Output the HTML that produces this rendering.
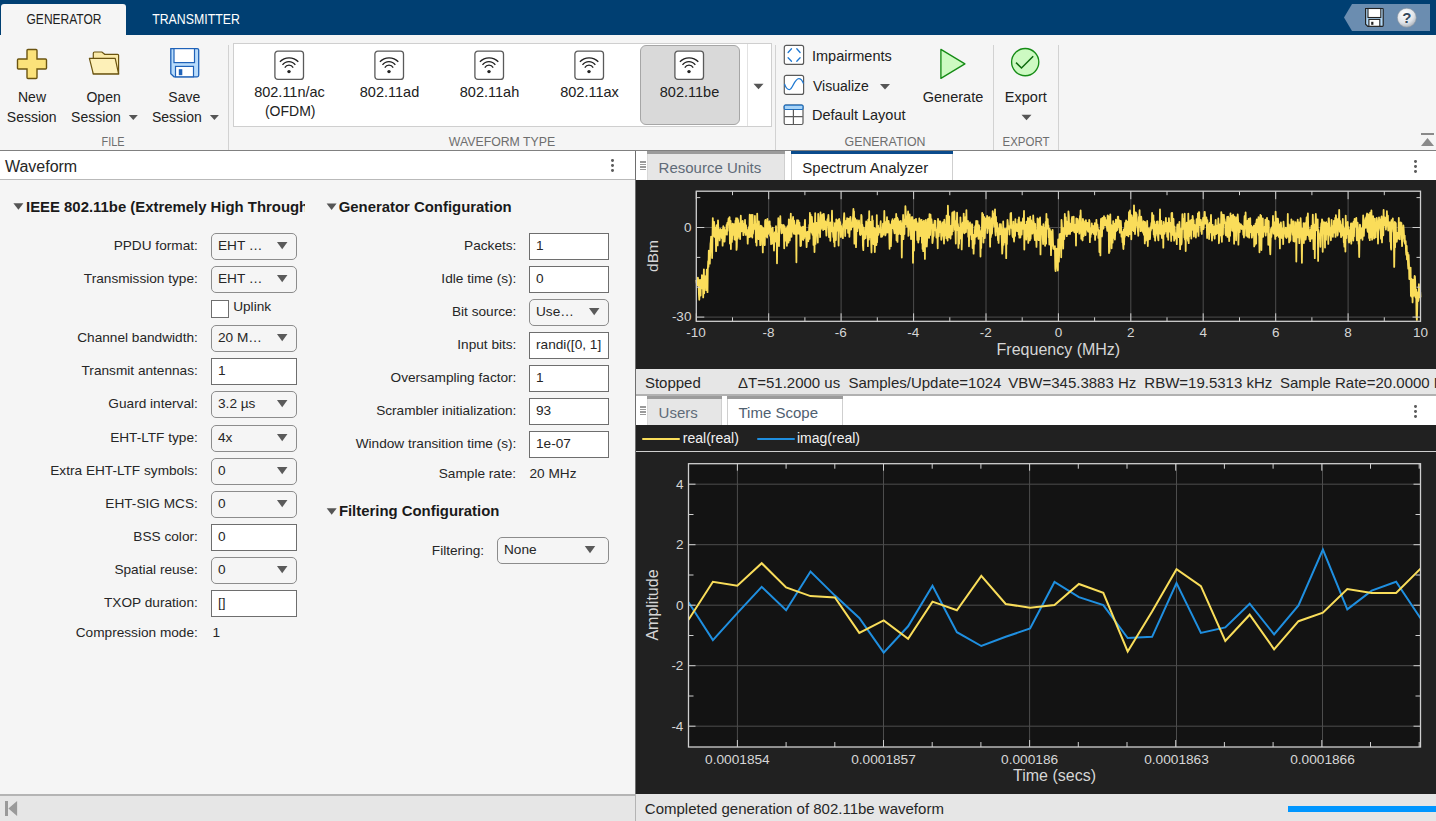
<!DOCTYPE html>
<html><head><meta charset="utf-8">
<style>
*{box-sizing:border-box;margin:0;padding:0}
html,body{width:1436px;height:821px;overflow:hidden;background:#f5f5f5;font-family:"Liberation Sans",sans-serif;color:#212121}
.a{position:absolute}
.t{position:absolute;white-space:nowrap;line-height:1}
svg{position:absolute;overflow:visible}
.dd{position:absolute;height:26px;border:1px solid #8c8c8c;border-radius:5px;background:#f5f5f5}
.ef{position:absolute;height:27px;border:1px solid #6e6e6e;background:#fff}
</style></head><body>

<div class="a" style="left:0px;top:0px;width:1436px;height:35px;background:#003f72"></div>
<div class="a" style="left:1px;top:4px;width:125px;height:31px;background:#f5f5f5;border-radius:3px 3px 0 0"></div>
<div class="t" style="left:-236.50px;width:600px;text-align:center;top:13.22px;font-size:13.8px;color:#1e1e1e;font-weight:normal;transform:scaleX(0.87)">GENERATOR</div>
<div class="t" style="left:-104.00px;width:600px;text-align:center;top:13.22px;font-size:13.8px;color:#ffffff;font-weight:normal;transform:scaleX(0.893)">TRANSMITTER</div>
<svg style="left:0;top:0" width="1436" height="40"><polygon points="1344,17.5 1352,4 1430,4 1430,31 1352,31" fill="#6b8db0"/></svg>
<svg style="left:1364px;top:7px" width="22" height="22" viewBox="0 0 22 22">
<path d="M1.6,1.5 H18.4 Q19.2,1.5 19.2,2.3 V18.6 Q19.2,19.4 18.4,19.4 H3.8 L1.6,17.2 Z" fill="#b3d9f7" stroke="#222" stroke-width="1.2"/>
<rect x="4" y="1.5" width="12.8" height="9" fill="#fff" stroke="#222" stroke-width="1.1"/>
<rect x="4.9" y="12.4" width="10.9" height="6.9" fill="#fff" stroke="#222" stroke-width="1.1"/>
<rect x="7.2" y="14.8" width="2.2" height="3" fill="#222"/>
</svg>
<svg style="left:1396px;top:7px" width="22" height="22" viewBox="0 0 22 22">
<defs><radialGradient id="hg" cx="0.4" cy="0.3" r="0.8"><stop offset="0" stop-color="#ffffff"/><stop offset="0.6" stop-color="#dfe3e8"/><stop offset="1" stop-color="#9aa3ad"/></radialGradient></defs>
<circle cx="10.8" cy="10.7" r="9.5" fill="url(#hg)" stroke="#8a949e" stroke-width="0.6"/>
<text x="10.9" y="16.2" text-anchor="middle" font-family="Liberation Sans" font-weight="bold" font-size="15" fill="#34475a">?</text>
</svg>
<div class="a" style="left:0px;top:150px;width:1436px;height:1px;background:#808080"></div>
<div class="a" style="left:228px;top:45px;width:1px;height:105px;background:#d2d2d2"></div>
<div class="a" style="left:775px;top:45px;width:1px;height:105px;background:#d2d2d2"></div>
<div class="a" style="left:993px;top:45px;width:1px;height:105px;background:#d2d2d2"></div>
<div class="a" style="left:1058px;top:45px;width:1px;height:105px;background:#d2d2d2"></div>
<svg style="left:16px;top:48px" width="32" height="32" viewBox="0 0 32 32">
<path d="M12,1.5 H20 Q21,1.5 21,2.5 V11 H29.5 Q30.5,11 30.5,12 V20 Q30.5,21 29.5,21 H21 V29.5 Q21,30.5 20,30.5 H12 Q11,30.5 11,29.5 V21 H2.5 Q1.5,21 1.5,20 V12 Q1.5,11 2.5,11 H11 V2.5 Q11,1.5 12,1.5 Z" fill="#fbe27a" stroke="#6b5410" stroke-width="1.4"/>
</svg>
<svg style="left:88px;top:50px" width="32" height="28" viewBox="0 0 32 28">
<path d="M5.3,3.2 Q5.3,2 6.5,2 H13.9 L16.7,4.3 H29.6 Q30.6,4.3 30.6,5.3 V23.8 H5.3 Z" fill="#fbeaa8" stroke="#6b5410" stroke-width="1.2"/>
<path d="M1.4,8.4 H27.2 L30.6,23.8 H5.3 Z" fill="#fdf0b8" stroke="#6b5410" stroke-width="1.2" stroke-linejoin="round"/>
</svg>
<svg style="left:169px;top:47px" width="32" height="32" viewBox="0 0 32 32">
<path d="M1.8,1.6 H28.2 Q29.7,1.6 29.7,3.1 V28.3 Q29.7,29.8 28.2,29.8 H5 L1.8,26.8 Z" fill="#b9dcfb" stroke="#1f62b8" stroke-width="1.3"/>
<rect x="5" y="1.6" width="20.5" height="14" fill="#fff" stroke="#1f62b8" stroke-width="1.2"/>
<rect x="6.5" y="19.4" width="18" height="10.4" fill="#fff" stroke="#1f62b8" stroke-width="1.2"/>
<rect x="9.8" y="22.2" width="3.5" height="6" fill="#1f62b8"/>
</svg>
<div class="t" style="left:-268.00px;width:600px;text-align:center;top:89.95px;font-size:14px;color:#212121;font-weight:normal;">New</div>
<div class="t" style="left:-268.30px;width:600px;text-align:center;top:109.75px;font-size:14px;color:#212121;font-weight:normal;">Session</div>
<div class="t" style="left:-196.40px;width:600px;text-align:center;top:89.95px;font-size:14px;color:#212121;font-weight:normal;">Open</div>
<div class="t" style="left:-204.00px;width:600px;text-align:center;top:109.75px;font-size:14px;color:#212121;font-weight:normal;">Session</div>
<div class="t" style="left:-115.70px;width:600px;text-align:center;top:89.95px;font-size:14px;color:#212121;font-weight:normal;">Save</div>
<div class="t" style="left:-123.20px;width:600px;text-align:center;top:109.75px;font-size:14px;color:#212121;font-weight:normal;">Session</div>
<svg style="left:0;top:0" width="1" height="1"><polygon points="128.8,114.9 137.8,114.9 133.3,119.9" fill="#555"/></svg>
<svg style="left:0;top:0" width="1" height="1"><polygon points="209.9,114.9 218.9,114.9 214.4,119.9" fill="#555"/></svg>
<div class="t" style="left:-187.50px;width:600px;text-align:center;top:135.39px;font-size:13.6px;color:#6e6e6e;font-weight:normal;transform:scaleX(0.80)">FILE</div>
<div class="a" style="left:233px;top:43px;width:539px;height:84px;background:#fff;border:1px solid #cfcfcf"></div>
<div class="a" style="left:640px;top:45px;width:100px;height:80px;background:#d9d9d9;border:1px solid #a6a6a6;border-radius:6px"></div>
<div class="a" style="left:747px;top:44px;width:1px;height:82px;background:#e2e2e2"></div>
<svg style="left:0;top:0" width="1" height="1"><polygon points="753.5,83.75 763.5,83.75 758.5,89.25" fill="#555"/></svg>
<svg style="left:274.3px;top:50px" width="30" height="30" viewBox="0 0 30 30">
<rect x="0.9" y="1.1" width="28.6" height="28.3" rx="3" fill="#fff" stroke="#5a5a5a" stroke-width="1.3"/>
<path d="M5.9,11.8 A12.6,12.6 0 0 1 24.3,11.8" fill="none" stroke="#222" stroke-width="1.3"/>
<path d="M8.5,14.8 A7.9,7.9 0 0 1 21.3,14.8" fill="none" stroke="#222" stroke-width="1.3"/>
<path d="M10.8,17.6 A4.9,4.9 0 0 1 19.2,17.6" fill="none" stroke="#222" stroke-width="1.3"/>
<circle cx="15" cy="21.6" r="1.7" fill="#222"/>
</svg>
<div class="t" style="left:-10.50px;width:600px;text-align:center;top:84.73px;font-size:14.5px;color:#212121;font-weight:normal;">802.11n/ac</div>
<svg style="left:374.3px;top:50px" width="30" height="30" viewBox="0 0 30 30">
<rect x="0.9" y="1.1" width="28.6" height="28.3" rx="3" fill="#fff" stroke="#5a5a5a" stroke-width="1.3"/>
<path d="M5.9,11.8 A12.6,12.6 0 0 1 24.3,11.8" fill="none" stroke="#222" stroke-width="1.3"/>
<path d="M8.5,14.8 A7.9,7.9 0 0 1 21.3,14.8" fill="none" stroke="#222" stroke-width="1.3"/>
<path d="M10.8,17.6 A4.9,4.9 0 0 1 19.2,17.6" fill="none" stroke="#222" stroke-width="1.3"/>
<circle cx="15" cy="21.6" r="1.7" fill="#222"/>
</svg>
<div class="t" style="left:89.50px;width:600px;text-align:center;top:84.73px;font-size:14.5px;color:#212121;font-weight:normal;">802.11ad</div>
<svg style="left:474.3px;top:50px" width="30" height="30" viewBox="0 0 30 30">
<rect x="0.9" y="1.1" width="28.6" height="28.3" rx="3" fill="#fff" stroke="#5a5a5a" stroke-width="1.3"/>
<path d="M5.9,11.8 A12.6,12.6 0 0 1 24.3,11.8" fill="none" stroke="#222" stroke-width="1.3"/>
<path d="M8.5,14.8 A7.9,7.9 0 0 1 21.3,14.8" fill="none" stroke="#222" stroke-width="1.3"/>
<path d="M10.8,17.6 A4.9,4.9 0 0 1 19.2,17.6" fill="none" stroke="#222" stroke-width="1.3"/>
<circle cx="15" cy="21.6" r="1.7" fill="#222"/>
</svg>
<div class="t" style="left:189.50px;width:600px;text-align:center;top:84.73px;font-size:14.5px;color:#212121;font-weight:normal;">802.11ah</div>
<svg style="left:574.3px;top:50px" width="30" height="30" viewBox="0 0 30 30">
<rect x="0.9" y="1.1" width="28.6" height="28.3" rx="3" fill="#fff" stroke="#5a5a5a" stroke-width="1.3"/>
<path d="M5.9,11.8 A12.6,12.6 0 0 1 24.3,11.8" fill="none" stroke="#222" stroke-width="1.3"/>
<path d="M8.5,14.8 A7.9,7.9 0 0 1 21.3,14.8" fill="none" stroke="#222" stroke-width="1.3"/>
<path d="M10.8,17.6 A4.9,4.9 0 0 1 19.2,17.6" fill="none" stroke="#222" stroke-width="1.3"/>
<circle cx="15" cy="21.6" r="1.7" fill="#222"/>
</svg>
<div class="t" style="left:289.50px;width:600px;text-align:center;top:84.73px;font-size:14.5px;color:#212121;font-weight:normal;">802.11ax</div>
<svg style="left:674.3px;top:50px" width="30" height="30" viewBox="0 0 30 30">
<rect x="0.9" y="1.1" width="28.6" height="28.3" rx="3" fill="#fff" stroke="#5a5a5a" stroke-width="1.3"/>
<path d="M5.9,11.8 A12.6,12.6 0 0 1 24.3,11.8" fill="none" stroke="#222" stroke-width="1.3"/>
<path d="M8.5,14.8 A7.9,7.9 0 0 1 21.3,14.8" fill="none" stroke="#222" stroke-width="1.3"/>
<path d="M10.8,17.6 A4.9,4.9 0 0 1 19.2,17.6" fill="none" stroke="#222" stroke-width="1.3"/>
<circle cx="15" cy="21.6" r="1.7" fill="#222"/>
</svg>
<div class="t" style="left:389.50px;width:600px;text-align:center;top:84.73px;font-size:14.5px;color:#212121;font-weight:normal;">802.11be</div>
<div class="t" style="left:-9.80px;width:600px;text-align:center;top:104.15px;font-size:14px;color:#212121;font-weight:normal;">(OFDM)</div>
<div class="t" style="left:202.40px;width:600px;text-align:center;top:135.39px;font-size:13.6px;color:#6e6e6e;font-weight:normal;transform:scaleX(0.905)">WAVEFORM TYPE</div>
<svg style="left:783px;top:44px" width="22" height="22" viewBox="0 0 22 22">
<rect x="1.3" y="1.4" width="19.3" height="19" rx="2" fill="#fff" stroke="#5a5a5a" stroke-width="1.2"/>
<g stroke="#1e78d2" stroke-width="1.3" fill="none" stroke-linecap="round"><path d="M5.1,8.5 L8.5,4.8"/><path d="M13.8,4.8 L17.1,8.5"/><path d="M5.1,13.7 L8.5,17.2"/><path d="M13.8,17.2 L17.1,13.7"/></g>
</svg>
<svg style="left:783px;top:74px" width="22" height="22" viewBox="0 0 22 22">
<rect x="1.3" y="1.3" width="19.3" height="19.1" rx="2" fill="#fff" stroke="#5a5a5a" stroke-width="1.2"/>
<path d="M1.5,9.9 C3,14.5 5,15.6 6.4,15.6 C9.5,15.6 11.5,4.6 15.8,4.6 C18,4.6 19.5,7 20.5,9.4" fill="none" stroke="#1e78d2" stroke-width="1.3"/>
</svg>
<svg style="left:783px;top:104px" width="22" height="22" viewBox="0 0 22 22">
<rect x="1.2" y="1.1" width="18.8" height="19.4" rx="1.5" fill="#fff" stroke="#5a5a5a" stroke-width="1.2"/>
<rect x="1.2" y="1.1" width="18.8" height="4.4" rx="1.2" fill="#a8d4f8" stroke="#1e6fc0" stroke-width="1.2"/>
<path d="M1.5,12.6 H19.8 M10.4,5.5 V20.4" stroke="#5a5a5a" stroke-width="1.2"/>
</svg>
<div class="t" style="left:812.00px;top:48.63px;font-size:14.5px;color:#212121;font-weight:normal;">Impairments</div>
<div class="t" style="left:813.00px;top:78.95px;font-size:14px;color:#212121;font-weight:normal;">Visualize</div>
<svg style="left:0;top:0" width="1" height="1"><polygon points="880.0,84.05 890.0,84.05 885,89.55" fill="#555"/></svg>
<div class="t" style="left:812.00px;top:107.73px;font-size:14.5px;color:#212121;font-weight:normal;">Default Layout</div>
<svg style="left:938px;top:47px" width="30" height="34" viewBox="0 0 30 34">
<polygon points="2.9,2.4 26.9,16.8 2.9,31.4" fill="#cdfac2" stroke="#158c15" stroke-width="1.35" stroke-linejoin="round"/>
</svg>
<div class="t" style="left:653.00px;width:600px;text-align:center;top:89.83px;font-size:14.5px;color:#212121;font-weight:normal;">Generate</div>
<div class="t" style="left:585.20px;width:600px;text-align:center;top:135.39px;font-size:13.6px;color:#6e6e6e;font-weight:normal;transform:scaleX(0.91)">GENERATION</div>
<svg style="left:1009px;top:46px" width="33" height="33" viewBox="0 0 33 33">
<circle cx="16.2" cy="16.1" r="13.6" fill="#cdfac2" stroke="#158c15" stroke-width="1.35"/>
<path d="M7,16.6 L12.5,22 L24.2,10.3" fill="none" stroke="#0e6a0e" stroke-width="1.5"/>
</svg>
<div class="t" style="left:725.80px;width:600px;text-align:center;top:89.83px;font-size:14.5px;color:#212121;font-weight:normal;">Export</div>
<svg style="left:0;top:0" width="1" height="1"><polygon points="1021.5,114.75 1031.5,114.75 1026.5,120.25" fill="#555"/></svg>
<div class="t" style="left:726.20px;width:600px;text-align:center;top:135.39px;font-size:13.6px;color:#6e6e6e;font-weight:normal;transform:scaleX(0.845)">EXPORT</div>
<div class="a" style="left:1421px;top:133px;width:13px;height:2px;background:#8a8a8a"></div>
<svg style="left:0;top:0" width="1" height="1"><polygon points="1421,146 1434,146 1427.5,138" fill="#8a8a8a"/></svg>
<div class="a" style="left:0px;top:151px;width:635px;height:29px;background:#fff"></div>
<div class="a" style="left:0px;top:179px;width:635px;height:1px;background:#b9b9b9"></div>
<div class="a" style="left:635px;top:151px;width:1px;height:644px;background:#6e6e6e"></div>
<div class="t" style="left:4.90px;top:159.06px;font-size:16px;color:#262626;font-weight:normal;">Waveform</div>
<div class="a" style="left:611.1px;top:159.1px;width:2.8px;height:2.8px;background:#5c5c5c;border-radius:50%"></div>
<div class="a" style="left:611.1px;top:164.1px;width:2.8px;height:2.8px;background:#5c5c5c;border-radius:50%"></div>
<div class="a" style="left:611.1px;top:169.1px;width:2.8px;height:2.8px;background:#5c5c5c;border-radius:50%"></div>
<svg style="left:0;top:0" width="1" height="1"><polygon points="13.4,203.2 23.4,203.2 18.4,209.7" fill="#555"/></svg>
<div class="t" style="left:26px;top:200.09px;width:279px;overflow:hidden;font-size:14.9px;font-weight:bold;color:#1a1a1a">IEEE 802.11be (Extremely High Throughput)</div>
<svg style="left:0;top:0" width="1" height="1"><polygon points="326.6,203.4 336.6,203.4 331.6,209.9" fill="#555"/></svg>
<div class="t" style="left:338.70px;top:200.09px;font-size:14.9px;color:#1a1a1a;font-weight:bold;">Generator Configuration</div>
<svg style="left:0;top:0" width="1" height="1"><polygon points="326.7,508.2 336.7,508.2 331.7,514.7" fill="#555"/></svg>
<div class="t" style="left:338.90px;top:503.69px;font-size:14.9px;color:#1a1a1a;font-weight:bold;">Filtering Configuration</div>
<div class="t" style="left:-402.20px;width:600px;text-align:right;top:238.65px;font-size:13.65px;color:#262626;font-weight:normal;">PPDU format:</div>
<div class="dd" style="left:211px;top:233px;width:86px;height:27px"></div>
<div class="t" style="left:218.00px;top:238.95px;font-size:13.65px;color:#262626;font-weight:normal;">EHT …</div>
<svg style="left:0;top:0" width="1" height="1"><polygon points="276.95,242.0 287.45,242.0 282.2,249.2" fill="#5a5a5a"/></svg>
<div class="t" style="left:-402.20px;width:600px;text-align:right;top:271.65px;font-size:13.65px;color:#262626;font-weight:normal;">Transmission type:</div>
<div class="dd" style="left:211px;top:266px;width:86px;height:27px"></div>
<div class="t" style="left:218.00px;top:271.95px;font-size:13.65px;color:#262626;font-weight:normal;">EHT …</div>
<svg style="left:0;top:0" width="1" height="1"><polygon points="276.95,275.0 287.45,275.0 282.2,282.20000000000005" fill="#5a5a5a"/></svg>
<div class="t" style="left:-402.20px;width:600px;text-align:right;top:330.65px;font-size:13.65px;color:#262626;font-weight:normal;">Channel bandwidth:</div>
<div class="dd" style="left:211px;top:325px;width:86px;height:27px"></div>
<div class="t" style="left:218.00px;top:330.95px;font-size:13.65px;color:#262626;font-weight:normal;">20 M…</div>
<svg style="left:0;top:0" width="1" height="1"><polygon points="276.95,334.0 287.45,334.0 282.2,341.20000000000005" fill="#5a5a5a"/></svg>
<div class="t" style="left:-402.20px;width:600px;text-align:right;top:363.65px;font-size:13.65px;color:#262626;font-weight:normal;">Transmit antennas:</div>
<div class="ef" style="left:211px;top:358px;width:86px;height:27px"></div>
<div class="t" style="left:218.00px;top:364.45px;font-size:13.65px;color:#262626;font-weight:normal;">1</div>
<div class="t" style="left:-402.20px;width:600px;text-align:right;top:396.65px;font-size:13.65px;color:#262626;font-weight:normal;">Guard interval:</div>
<div class="dd" style="left:211px;top:391px;width:86px;height:27px"></div>
<div class="t" style="left:218.00px;top:396.95px;font-size:13.65px;color:#262626;font-weight:normal;">3.2 µs</div>
<svg style="left:0;top:0" width="1" height="1"><polygon points="276.95,400.0 287.45,400.0 282.2,407.20000000000005" fill="#5a5a5a"/></svg>
<div class="t" style="left:-402.20px;width:600px;text-align:right;top:430.65px;font-size:13.65px;color:#262626;font-weight:normal;">EHT-LTF type:</div>
<div class="dd" style="left:211px;top:425px;width:86px;height:27px"></div>
<div class="t" style="left:218.00px;top:430.95px;font-size:13.65px;color:#262626;font-weight:normal;">4x</div>
<svg style="left:0;top:0" width="1" height="1"><polygon points="276.95,434.0 287.45,434.0 282.2,441.20000000000005" fill="#5a5a5a"/></svg>
<div class="t" style="left:-402.20px;width:600px;text-align:right;top:463.65px;font-size:13.65px;color:#262626;font-weight:normal;">Extra EHT-LTF symbols:</div>
<div class="dd" style="left:211px;top:458px;width:86px;height:27px"></div>
<div class="t" style="left:218.00px;top:463.95px;font-size:13.65px;color:#262626;font-weight:normal;">0</div>
<svg style="left:0;top:0" width="1" height="1"><polygon points="276.95,467.0 287.45,467.0 282.2,474.20000000000005" fill="#5a5a5a"/></svg>
<div class="t" style="left:-402.20px;width:600px;text-align:right;top:496.65px;font-size:13.65px;color:#262626;font-weight:normal;">EHT-SIG MCS:</div>
<div class="dd" style="left:211px;top:491px;width:86px;height:27px"></div>
<div class="t" style="left:218.00px;top:496.95px;font-size:13.65px;color:#262626;font-weight:normal;">0</div>
<svg style="left:0;top:0" width="1" height="1"><polygon points="276.95,500.0 287.45,500.0 282.2,507.20000000000005" fill="#5a5a5a"/></svg>
<div class="t" style="left:-402.20px;width:600px;text-align:right;top:529.65px;font-size:13.65px;color:#262626;font-weight:normal;">BSS color:</div>
<div class="ef" style="left:211px;top:524px;width:86px;height:27px"></div>
<div class="t" style="left:218.00px;top:530.45px;font-size:13.65px;color:#262626;font-weight:normal;">0</div>
<div class="t" style="left:-402.20px;width:600px;text-align:right;top:562.65px;font-size:13.65px;color:#262626;font-weight:normal;">Spatial reuse:</div>
<div class="dd" style="left:211px;top:557px;width:86px;height:27px"></div>
<div class="t" style="left:218.00px;top:562.95px;font-size:13.65px;color:#262626;font-weight:normal;">0</div>
<svg style="left:0;top:0" width="1" height="1"><polygon points="276.95,566.0 287.45,566.0 282.2,573.2" fill="#5a5a5a"/></svg>
<div class="t" style="left:-402.20px;width:600px;text-align:right;top:595.65px;font-size:13.65px;color:#262626;font-weight:normal;">TXOP duration:</div>
<div class="ef" style="left:211px;top:590px;width:86px;height:27px"></div>
<div class="t" style="left:218.00px;top:596.45px;font-size:13.65px;color:#262626;font-weight:normal;">[]</div>
<div class="a" style="left:211px;top:300px;width:18px;height:18px;background:#fff;border:1px solid #6e6e6e"></div>
<div class="t" style="left:233.20px;top:300.05px;font-size:13.65px;color:#262626;font-weight:normal;">Uplink</div>
<div class="t" style="left:-402.20px;width:600px;text-align:right;top:626.05px;font-size:13.65px;color:#262626;font-weight:normal;">Compression mode:</div>
<div class="t" style="left:212.50px;top:626.05px;font-size:13.65px;color:#262626;font-weight:normal;">1</div>
<div class="t" style="left:-83.60px;width:600px;text-align:right;top:238.65px;font-size:13.65px;color:#262626;font-weight:normal;">Packets:</div>
<div class="ef" style="left:529px;top:233px;width:80px;height:27px"></div>
<div class="t" style="left:536.00px;top:239.45px;font-size:13.65px;color:#262626;font-weight:normal;">1</div>
<div class="t" style="left:-83.60px;width:600px;text-align:right;top:271.65px;font-size:13.65px;color:#262626;font-weight:normal;">Idle time (s):</div>
<div class="ef" style="left:529px;top:266px;width:80px;height:27px"></div>
<div class="t" style="left:536.00px;top:272.45px;font-size:13.65px;color:#262626;font-weight:normal;">0</div>
<div class="t" style="left:-83.60px;width:600px;text-align:right;top:304.65px;font-size:13.65px;color:#262626;font-weight:normal;">Bit source:</div>
<div class="dd" style="left:529px;top:299px;width:80px;height:27px"></div>
<div class="t" style="left:536.00px;top:304.95px;font-size:13.65px;color:#262626;font-weight:normal;">Use…</div>
<svg style="left:0;top:0" width="1" height="1"><polygon points="588.95,308.0 599.45,308.0 594.2,315.20000000000005" fill="#5a5a5a"/></svg>
<div class="t" style="left:-83.60px;width:600px;text-align:right;top:337.65px;font-size:13.65px;color:#262626;font-weight:normal;">Input bits:</div>
<div class="ef" style="left:529px;top:332px;width:80px;height:27px"></div>
<div class="t" style="left:536.00px;top:338.45px;font-size:13.65px;color:#262626;font-weight:normal;">randi([0, 1]</div>
<div class="t" style="left:-83.60px;width:600px;text-align:right;top:370.65px;font-size:13.65px;color:#262626;font-weight:normal;">Oversampling factor:</div>
<div class="ef" style="left:529px;top:365px;width:80px;height:27px"></div>
<div class="t" style="left:536.00px;top:371.45px;font-size:13.65px;color:#262626;font-weight:normal;">1</div>
<div class="t" style="left:-83.60px;width:600px;text-align:right;top:403.65px;font-size:13.65px;color:#262626;font-weight:normal;">Scrambler initialization:</div>
<div class="ef" style="left:529px;top:398px;width:80px;height:27px"></div>
<div class="t" style="left:536.00px;top:404.45px;font-size:13.65px;color:#262626;font-weight:normal;">93</div>
<div class="t" style="left:-83.60px;width:600px;text-align:right;top:436.65px;font-size:13.65px;color:#262626;font-weight:normal;">Window transition time (s):</div>
<div class="ef" style="left:529px;top:431px;width:80px;height:27px"></div>
<div class="t" style="left:536.00px;top:437.45px;font-size:13.65px;color:#262626;font-weight:normal;">1e-07</div>
<div class="t" style="left:-83.90px;width:600px;text-align:right;top:467.25px;font-size:13.65px;color:#262626;font-weight:normal;">Sample rate:</div>
<div class="t" style="left:529.50px;top:467.25px;font-size:13.65px;color:#262626;font-weight:normal;">20 MHz</div>
<div class="t" style="left:-115.90px;width:600px;text-align:right;top:543.65px;font-size:13.65px;color:#262626;font-weight:normal;">Filtering:</div>
<div class="dd" style="left:497px;top:537px;width:112px;height:27px"></div>
<div class="t" style="left:504.00px;top:542.95px;font-size:13.65px;color:#262626;font-weight:normal;">None</div>
<svg style="left:0;top:0" width="1" height="1"><polygon points="584.75,546.0 595.25,546.0 590,553.2" fill="#5a5a5a"/></svg>
<div class="a" style="left:636px;top:151px;width:800px;height:29px;background:#fff"></div>
<div class="a" style="left:640px;top:161.2px;width:6px;height:1.4px;background:#9a9a9a"></div>
<div class="a" style="left:640px;top:163.8px;width:6px;height:1.4px;background:#9a9a9a"></div>
<div class="a" style="left:640px;top:166.4px;width:6px;height:1.4px;background:#9a9a9a"></div>
<div class="a" style="left:640px;top:169.0px;width:6px;height:1.4px;background:#9a9a9a"></div>
<div class="a" style="left:647px;top:151px;width:138px;height:29px;background:#e6e6e6;border-right:1px solid #cfcfcf;border-left:1px solid #d8d8d8"></div>
<div class="a" style="left:647px;top:151px;width:138px;height:3px;background:#9b9b9b"></div>
<div class="t" style="left:658.60px;top:159.50px;font-size:15px;color:#5f6b78;font-weight:normal;">Resource Units</div>
<div class="a" style="left:791px;top:151px;width:162px;height:29px;background:#fff;border-left:1px solid #cfcfcf;border-right:1px solid #cfcfcf"></div>
<div class="a" style="left:791px;top:151px;width:162px;height:3px;background:#0a4b8c"></div>
<div class="t" style="left:802.30px;top:159.50px;font-size:15px;color:#1f1f1f;font-weight:normal;">Spectrum Analyzer</div>
<div class="a" style="left:1414.1px;top:160.1px;width:2.8px;height:2.8px;background:#5c5c5c;border-radius:50%"></div>
<div class="a" style="left:1414.1px;top:165.1px;width:2.8px;height:2.8px;background:#5c5c5c;border-radius:50%"></div>
<div class="a" style="left:1414.1px;top:170.1px;width:2.8px;height:2.8px;background:#5c5c5c;border-radius:50%"></div>
<div class="a" style="left:636px;top:180px;width:800px;height:189px;background:#212121"></div>
<div class="a" style="left:636px;top:369px;width:800px;height:26px;background:#e6e6e6"></div>
<div class="a" style="left:636px;top:394px;width:800px;height:2px;background:#b1b1b1"></div>
<div class="t" style="left:644.90px;top:375.10px;font-size:15px;color:#262626;font-weight:normal;">Stopped</div>
<div class="t" style="left:738.00px;top:375.10px;font-size:15px;color:#262626;font-weight:normal;">ΔT=51.2000 us</div>
<div class="t" style="left:848.40px;top:375.10px;font-size:15px;color:#262626;font-weight:normal;">Samples/Update=1024</div>
<div class="t" style="left:1008.30px;top:375.10px;font-size:15px;color:#262626;font-weight:normal;">VBW=345.3883 Hz</div>
<div class="t" style="left:1144.30px;top:375.10px;font-size:15px;color:#262626;font-weight:normal;">RBW=19.5313 kHz</div>
<div class="t" style="left:1280.00px;top:375.10px;font-size:15px;color:#262626;font-weight:normal;">Sample Rate=20.0000 MHz</div>
<svg style="left:0;top:0" width="1436" height="821">
<rect x="696.3" y="191.2" width="724.2" height="130.10000000000002" fill="#131313"/>
<line x1="768.7" y1="191.2" x2="768.7" y2="321.3" stroke="#4d4d4d" stroke-width="1"/>
<line x1="841.1" y1="191.2" x2="841.1" y2="321.3" stroke="#4d4d4d" stroke-width="1"/>
<line x1="913.6" y1="191.2" x2="913.6" y2="321.3" stroke="#4d4d4d" stroke-width="1"/>
<line x1="986.0" y1="191.2" x2="986.0" y2="321.3" stroke="#4d4d4d" stroke-width="1"/>
<line x1="1058.4" y1="191.2" x2="1058.4" y2="321.3" stroke="#4d4d4d" stroke-width="1"/>
<line x1="1130.8" y1="191.2" x2="1130.8" y2="321.3" stroke="#4d4d4d" stroke-width="1"/>
<line x1="1203.2" y1="191.2" x2="1203.2" y2="321.3" stroke="#4d4d4d" stroke-width="1"/>
<line x1="1275.7" y1="191.2" x2="1275.7" y2="321.3" stroke="#4d4d4d" stroke-width="1"/>
<line x1="1348.1" y1="191.2" x2="1348.1" y2="321.3" stroke="#4d4d4d" stroke-width="1"/>
<line x1="696.3" y1="227.5" x2="1420.5" y2="227.5" stroke="#4d4d4d" stroke-width="1"/>
<line x1="696.3" y1="317.1" x2="1420.5" y2="317.1" stroke="#4d4d4d" stroke-width="1"/>
<polyline points="696.3,280.0 696.6,282.6 697.0,284.4 697.3,280.4 697.6,285.2 697.9,277.6 698.3,280.6 698.6,281.7 698.9,294.0 699.3,299.8 699.6,292.9 699.9,279.9 700.3,281.4 700.6,295.5 700.9,279.8 701.2,288.1 701.6,288.4 701.9,275.2 702.2,282.9 702.6,281.8 702.9,281.9 703.2,297.4 703.5,281.8 703.9,269.3 704.2,293.3 704.5,277.8 704.9,276.7 705.2,276.3 705.5,286.4 705.9,283.9 706.2,290.1 706.5,280.2 706.8,269.6 707.2,281.7 707.5,292.2 707.8,269.8 708.2,261.2 708.5,266.7 708.8,250.6 709.1,261.1 709.5,257.1 709.8,263.7 710.1,254.9 710.5,243.9 710.8,241.5 711.1,236.6 711.4,237.4 711.8,236.8 712.1,258.1 712.4,242.8 712.8,218.1 713.1,236.1 713.4,225.2 713.8,228.8 714.1,221.9 714.4,227.2 714.7,236.9 715.1,236.0 715.4,227.9 715.7,235.2 716.1,251.2 716.4,228.4 716.7,225.1 717.0,225.6 717.4,225.3 717.7,245.4 718.0,220.3 718.4,232.1 718.7,238.0 719.0,233.6 719.4,235.6 719.7,240.4 720.0,230.0 720.3,229.0 720.7,232.2 721.0,229.9 721.3,233.0 721.7,238.1 722.0,237.3 722.3,229.3 722.6,245.7 723.0,237.2 723.3,226.2 723.6,230.7 724.0,227.5 724.3,231.9 724.6,241.6 725.0,234.5 725.3,230.3 725.6,234.1 725.9,232.3 726.3,229.7 726.6,224.8 726.9,234.6 727.3,222.9 727.6,230.8 727.9,223.6 728.2,222.4 728.6,218.3 728.9,222.0 729.2,221.5 729.6,217.2 729.9,243.6 730.2,236.1 730.6,220.9 730.9,249.1 731.2,227.0 731.5,227.2 731.9,241.9 732.2,236.1 732.5,223.6 732.9,224.2 733.2,232.8 733.5,234.9 733.8,233.7 734.2,224.1 734.5,239.4 734.8,227.0 735.2,239.8 735.5,220.7 735.8,225.6 736.1,218.2 736.5,249.9 736.8,247.0 737.1,233.2 737.5,218.3 737.8,238.6 738.1,220.0 738.5,227.7 738.8,227.6 739.1,223.5 739.4,236.8 739.8,233.2 740.1,239.0 740.4,227.4 740.8,215.7 741.1,231.4 741.4,224.8 741.7,226.0 742.1,227.7 742.4,231.1 742.7,221.0 743.1,230.0 743.4,235.2 743.7,223.8 744.1,226.0 744.4,229.2 744.7,232.3 745.0,219.9 745.4,230.4 745.7,234.9 746.0,225.2 746.4,231.5 746.7,229.0 747.0,231.6 747.3,230.2 747.7,243.7 748.0,235.8 748.3,235.0 748.7,231.0 749.0,226.9 749.3,237.1 749.7,214.7 750.0,229.3 750.3,224.7 750.6,236.6 751.0,234.0 751.3,215.0 751.6,221.0 752.0,226.6 752.3,237.6 752.6,215.0 752.9,233.9 753.3,230.2 753.6,228.1 753.9,224.7 754.3,227.9 754.6,228.7 754.9,215.9 755.3,228.4 755.6,226.1 755.9,242.3 756.2,223.8 756.6,245.5 756.9,234.3 757.2,213.6 757.6,234.9 757.9,228.6 758.2,238.7 758.5,239.0 758.9,221.4 759.2,233.6 759.5,231.3 759.9,233.7 760.2,245.2 760.5,233.9 760.8,225.7 761.2,240.2 761.5,230.8 761.8,226.5 762.2,245.0 762.5,227.8 762.8,252.4 763.2,228.2 763.5,235.2 763.8,241.4 764.1,231.9 764.5,235.2 764.8,245.1 765.1,221.0 765.5,219.8 765.8,236.3 766.1,230.4 766.4,230.7 766.8,228.4 767.1,237.5 767.4,219.0 767.8,225.3 768.1,234.0 768.4,229.7 768.8,232.2 769.1,227.4 769.4,221.3 769.7,221.4 770.1,235.8 770.4,226.0 770.7,234.7 771.1,244.1 771.4,237.5 771.7,228.9 772.0,243.6 772.4,236.2 772.7,227.6 773.0,237.2 773.4,238.0 773.7,240.5 774.0,250.5 774.4,235.1 774.7,232.8 775.0,232.1 775.3,241.6 775.7,241.0 776.0,226.1 776.3,239.6 776.7,233.5 777.0,263.3 777.3,239.0 777.6,238.5 778.0,242.6 778.3,218.2 778.6,230.8 779.0,246.1 779.3,227.0 779.6,227.0 780.0,226.2 780.3,216.1 780.6,225.8 780.9,224.9 781.3,230.5 781.6,233.4 781.9,224.9 782.3,225.6 782.6,232.7 782.9,229.2 783.2,225.1 783.6,225.0 783.9,231.4 784.2,248.3 784.6,226.4 784.9,231.8 785.2,237.5 785.5,233.9 785.9,240.6 786.2,228.7 786.5,233.5 786.9,245.8 787.2,227.6 787.5,226.3 787.9,231.1 788.2,225.3 788.5,242.6 788.8,219.4 789.2,225.5 789.5,219.9 789.8,240.4 790.2,231.3 790.5,228.7 790.8,213.6 791.1,226.2 791.5,236.8 791.8,221.8 792.1,224.0 792.5,231.5 792.8,219.3 793.1,217.0 793.5,227.2 793.8,233.7 794.1,220.6 794.4,222.9 794.8,228.8 795.1,234.0 795.4,230.0 795.8,225.3 796.1,229.2 796.4,262.3 796.7,226.8 797.1,220.1 797.4,229.9 797.7,227.0 798.1,233.5 798.4,220.3 798.7,233.7 799.1,223.7 799.4,222.6 799.7,234.0 800.0,226.2 800.4,246.0 800.7,228.8 801.0,245.7 801.4,227.4 801.7,235.1 802.0,233.2 802.3,239.4 802.7,230.0 803.0,226.7 803.3,240.0 803.7,235.0 804.0,230.6 804.3,237.9 804.7,224.3 805.0,219.9 805.3,231.7 805.6,234.6 806.0,232.7 806.3,240.9 806.6,247.1 807.0,240.0 807.3,231.6 807.6,235.8 807.9,240.4 808.3,241.2 808.6,231.7 808.9,233.7 809.3,224.9 809.6,238.8 809.9,212.8 810.2,229.5 810.6,214.7 810.9,231.2 811.2,224.5 811.6,232.6 811.9,216.8 812.2,223.5 812.6,234.8 812.9,230.2 813.2,223.5 813.5,244.9 813.9,234.5 814.2,232.9 814.5,252.1 814.9,224.9 815.2,213.2 815.5,243.9 815.8,236.8 816.2,225.0 816.5,222.9 816.8,223.3 817.2,228.3 817.5,230.4 817.8,242.5 818.2,213.9 818.5,217.3 818.8,232.5 819.1,227.4 819.5,229.5 819.8,230.9 820.1,237.1 820.5,212.4 820.8,229.1 821.1,221.7 821.4,228.2 821.8,224.1 822.1,215.0 822.4,224.7 822.8,214.5 823.1,230.1 823.4,219.0 823.8,213.9 824.1,217.9 824.4,229.1 824.7,226.5 825.1,229.2 825.4,221.5 825.7,225.8 826.1,230.9 826.4,235.7 826.7,230.1 827.0,224.9 827.4,219.2 827.7,221.4 828.0,219.2 828.4,214.9 828.7,220.5 829.0,237.1 829.3,225.5 829.7,236.1 830.0,222.9 830.3,240.8 830.7,225.4 831.0,224.6 831.3,221.8 831.7,226.9 832.0,210.7 832.3,231.5 832.6,222.1 833.0,232.2 833.3,237.0 833.6,232.4 834.0,242.2 834.3,227.5 834.6,246.4 834.9,223.2 835.3,229.9 835.6,224.7 835.9,240.1 836.3,219.3 836.6,221.1 836.9,222.5 837.3,230.5 837.6,223.4 837.9,229.6 838.2,220.1 838.6,245.5 838.9,228.1 839.2,218.8 839.6,222.0 839.9,221.7 840.2,222.5 840.5,227.3 840.9,237.0 841.2,225.8 841.5,233.3 841.9,232.2 842.2,231.1 842.5,230.1 842.9,238.2 843.2,224.2 843.5,227.1 843.8,219.5 844.2,213.2 844.5,220.2 844.8,223.9 845.2,236.0 845.5,223.7 845.8,221.6 846.1,220.9 846.5,223.1 846.8,228.4 847.1,218.1 847.5,224.3 847.8,218.7 848.1,232.8 848.5,224.7 848.8,218.8 849.1,218.7 849.4,236.8 849.8,227.2 850.1,228.8 850.4,216.8 850.8,221.6 851.1,229.6 851.4,223.9 851.7,227.4 852.1,222.9 852.4,226.8 852.7,221.8 853.1,215.2 853.4,209.0 853.7,218.0 854.0,211.5 854.4,243.7 854.7,218.8 855.0,218.2 855.4,220.0 855.7,223.9 856.0,247.2 856.4,232.3 856.7,224.9 857.0,220.2 857.3,231.1 857.7,223.4 858.0,224.6 858.3,224.8 858.7,224.0 859.0,220.4 859.3,228.1 859.6,227.3 860.0,234.6 860.3,230.6 860.6,235.0 861.0,225.1 861.3,214.9 861.6,216.3 862.0,233.9 862.3,224.6 862.6,227.2 862.9,245.1 863.3,250.2 863.6,232.6 863.9,227.7 864.3,239.1 864.6,235.0 864.9,233.9 865.2,234.8 865.6,238.2 865.9,228.2 866.2,221.4 866.6,224.2 866.9,234.4 867.2,227.8 867.6,226.2 867.9,246.2 868.2,219.7 868.5,233.2 868.9,239.5 869.2,211.2 869.5,237.2 869.9,231.0 870.2,235.1 870.5,221.9 870.8,231.7 871.2,243.5 871.5,252.4 871.8,234.2 872.2,216.2 872.5,239.2 872.8,220.5 873.2,237.2 873.5,244.2 873.8,231.1 874.1,227.8 874.5,231.1 874.8,252.1 875.1,236.3 875.5,228.8 875.8,236.3 876.1,228.4 876.4,245.0 876.8,215.1 877.1,242.1 877.4,233.0 877.8,233.0 878.1,225.7 878.4,234.9 878.7,231.6 879.1,232.6 879.4,228.4 879.7,228.4 880.1,232.0 880.4,225.2 880.7,221.2 881.1,236.9 881.4,236.0 881.7,236.2 882.0,236.5 882.4,235.7 882.7,229.3 883.0,223.6 883.4,234.5 883.7,225.0 884.0,231.4 884.3,211.0 884.7,225.4 885.0,221.6 885.3,235.4 885.7,234.0 886.0,224.6 886.3,232.6 886.7,226.2 887.0,217.1 887.3,231.5 887.6,232.5 888.0,224.0 888.3,227.5 888.6,220.9 889.0,227.1 889.3,235.8 889.6,248.8 889.9,224.5 890.3,233.6 890.6,227.0 890.9,246.1 891.3,235.0 891.6,225.9 891.9,221.1 892.3,220.8 892.6,219.2 892.9,228.2 893.2,220.7 893.6,224.7 893.9,229.1 894.2,230.7 894.6,233.4 894.9,219.0 895.2,226.1 895.5,232.7 895.9,227.6 896.2,213.9 896.5,240.3 896.9,240.2 897.2,217.7 897.5,241.9 897.9,219.0 898.2,234.3 898.5,226.9 898.8,221.2 899.2,221.6 899.5,225.5 899.8,231.7 900.2,234.0 900.5,234.0 900.8,221.0 901.1,229.3 901.5,223.2 901.8,257.6 902.1,233.9 902.5,228.1 902.8,233.2 903.1,215.0 903.4,239.2 903.8,224.0 904.1,220.8 904.4,234.0 904.8,219.5 905.1,222.0 905.4,206.2 905.8,213.7 906.1,224.0 906.4,216.1 906.7,219.8 907.1,226.7 907.4,217.7 907.7,218.8 908.1,211.4 908.4,235.9 908.7,235.3 909.0,229.1 909.4,217.3 909.7,214.4 910.0,223.4 910.4,220.6 910.7,222.4 911.0,239.1 911.4,230.8 911.7,217.1 912.0,218.2 912.3,217.2 912.7,223.5 913.0,262.8 913.3,237.7 913.7,238.8 914.0,250.5 914.3,219.9 914.6,230.8 915.0,221.6 915.3,222.6 915.6,224.0 916.0,218.8 916.3,230.0 916.6,221.9 917.0,225.3 917.3,239.9 917.6,233.8 917.9,238.9 918.3,242.6 918.6,223.1 918.9,239.8 919.3,218.3 919.6,227.1 919.9,226.8 920.2,236.0 920.6,221.4 920.9,232.6 921.2,219.8 921.6,219.9 921.9,242.8 922.2,222.7 922.6,248.9 922.9,221.8 923.2,251.2 923.5,239.0 923.9,220.7 924.2,228.9 924.5,225.8 924.9,258.9 925.2,225.6 925.5,238.9 925.8,219.8 926.2,230.7 926.5,231.7 926.8,246.5 927.2,238.3 927.5,229.8 927.8,219.1 928.1,219.0 928.5,229.7 928.8,237.6 929.1,237.9 929.5,214.1 929.8,223.2 930.1,235.1 930.5,214.6 930.8,221.1 931.1,219.6 931.4,219.2 931.8,223.2 932.1,230.6 932.4,243.1 932.8,240.1 933.1,235.9 933.4,224.6 933.7,235.9 934.1,224.0 934.4,223.9 934.7,220.6 935.1,220.9 935.4,220.8 935.7,230.6 936.1,231.1 936.4,237.5 936.7,229.5 937.0,230.0 937.4,236.0 937.7,248.3 938.0,218.9 938.4,223.5 938.7,236.3 939.0,231.1 939.3,221.3 939.7,232.1 940.0,225.7 940.3,221.3 940.7,223.6 941.0,232.2 941.3,239.8 941.7,236.1 942.0,228.0 942.3,235.7 942.6,223.0 943.0,222.1 943.3,223.5 943.6,227.9 944.0,243.5 944.3,219.7 944.6,224.4 944.9,234.5 945.3,235.4 945.6,231.8 945.9,224.3 946.3,238.3 946.6,215.6 946.9,226.7 947.3,219.3 947.6,240.6 947.9,205.7 948.2,217.5 948.6,226.4 948.9,237.2 949.2,216.3 949.6,230.7 949.9,231.1 950.2,235.4 950.5,238.7 950.9,227.1 951.2,225.6 951.5,228.6 951.9,234.5 952.2,213.3 952.5,212.4 952.8,231.2 953.2,214.4 953.5,223.6 953.8,225.0 954.2,211.3 954.5,212.5 954.8,229.8 955.2,221.3 955.5,232.5 955.8,243.6 956.1,220.8 956.5,224.0 956.8,222.1 957.1,212.7 957.5,230.1 957.8,223.9 958.1,226.6 958.4,247.9 958.8,229.6 959.1,243.7 959.4,227.6 959.8,237.8 960.1,238.5 960.4,217.3 960.8,230.8 961.1,229.2 961.4,223.8 961.7,249.4 962.1,234.3 962.4,232.5 962.7,222.4 963.1,223.8 963.4,231.3 963.7,213.6 964.0,230.8 964.4,233.3 964.7,223.2 965.0,232.6 965.4,217.1 965.7,223.5 966.0,232.0 966.4,210.1 966.7,228.5 967.0,225.1 967.3,221.9 967.7,221.5 968.0,221.0 968.3,236.8 968.7,224.0 969.0,246.3 969.3,227.4 969.6,226.9 970.0,222.5 970.3,234.6 970.6,226.2 971.0,233.1 971.3,229.5 971.6,239.3 972.0,224.2 972.3,225.0 972.6,248.1 972.9,234.7 973.3,235.7 973.6,253.7 973.9,244.7 974.3,234.7 974.6,243.8 974.9,230.8 975.2,226.1 975.6,236.9 975.9,226.4 976.2,220.8 976.6,236.3 976.9,222.1 977.2,222.1 977.5,221.2 977.9,230.9 978.2,229.1 978.5,238.8 978.9,225.2 979.2,226.3 979.5,229.1 979.9,232.1 980.2,237.6 980.5,256.6 980.8,235.9 981.2,248.0 981.5,230.8 981.8,236.3 982.2,212.9 982.5,233.0 982.8,235.6 983.1,214.3 983.5,242.6 983.8,217.4 984.1,216.9 984.5,226.2 984.8,238.0 985.1,230.3 985.5,223.8 985.8,218.3 986.1,220.3 986.4,221.0 986.8,227.7 987.1,216.0 987.4,233.0 987.8,229.4 988.1,221.9 988.4,217.5 988.7,219.8 989.1,219.7 989.4,228.1 989.7,217.1 990.1,246.7 990.4,230.4 990.7,237.4 991.1,234.8 991.4,221.4 991.7,218.5 992.0,233.5 992.4,224.4 992.7,211.1 993.0,221.5 993.4,213.4 993.7,215.9 994.0,215.2 994.3,226.4 994.7,221.2 995.0,209.3 995.3,231.4 995.7,235.5 996.0,216.8 996.3,231.3 996.7,226.4 997.0,222.9 997.3,231.3 997.6,230.5 998.0,240.1 998.3,231.0 998.6,242.9 999.0,228.1 999.3,230.8 999.6,224.2 999.9,234.3 1000.3,224.7 1000.6,224.2 1000.9,224.2 1001.3,229.2 1001.6,236.1 1001.9,244.0 1002.2,253.7 1002.6,247.4 1002.9,240.7 1003.2,221.5 1003.6,244.8 1003.9,235.4 1004.2,231.5 1004.6,242.4 1004.9,228.8 1005.2,239.9 1005.5,231.5 1005.9,233.8 1006.2,258.2 1006.5,228.4 1006.9,244.0 1007.2,228.6 1007.5,220.0 1007.8,223.0 1008.2,228.8 1008.5,227.7 1008.8,226.2 1009.2,229.1 1009.5,234.5 1009.8,227.0 1010.2,227.6 1010.5,213.4 1010.8,223.5 1011.1,212.8 1011.5,228.1 1011.8,225.2 1012.1,227.9 1012.5,235.7 1012.8,237.0 1013.1,231.0 1013.4,221.6 1013.8,238.5 1014.1,241.7 1014.4,229.8 1014.8,235.1 1015.1,236.0 1015.4,219.2 1015.8,230.7 1016.1,226.0 1016.4,230.8 1016.7,224.2 1017.1,230.5 1017.4,231.1 1017.7,224.4 1018.1,229.8 1018.4,219.6 1018.7,234.6 1019.0,217.5 1019.4,237.7 1019.7,230.8 1020.0,226.2 1020.4,237.5 1020.7,232.4 1021.0,222.1 1021.4,229.9 1021.7,234.6 1022.0,222.8 1022.3,227.8 1022.7,224.4 1023.0,218.5 1023.3,228.8 1023.7,226.1 1024.0,210.9 1024.3,249.6 1024.6,226.9 1025.0,235.2 1025.3,224.8 1025.6,235.0 1026.0,231.5 1026.3,239.6 1026.6,221.6 1026.9,226.9 1027.3,229.2 1027.6,236.0 1027.9,217.9 1028.3,242.9 1028.6,218.5 1028.9,223.2 1029.3,230.7 1029.6,225.6 1029.9,240.3 1030.2,216.6 1030.6,238.6 1030.9,231.8 1031.2,220.5 1031.6,230.6 1031.9,225.7 1032.2,226.1 1032.5,233.6 1032.9,231.7 1033.2,215.5 1033.5,220.9 1033.9,223.0 1034.2,226.9 1034.5,235.4 1034.9,240.1 1035.2,223.8 1035.5,233.9 1035.8,231.8 1036.2,240.2 1036.5,246.9 1036.8,230.2 1037.2,239.7 1037.5,218.5 1037.8,220.7 1038.1,234.7 1038.5,224.4 1038.8,240.2 1039.1,224.4 1039.5,218.5 1039.8,227.6 1040.1,217.5 1040.5,254.4 1040.8,232.1 1041.1,233.6 1041.4,226.4 1041.8,231.3 1042.1,227.0 1042.4,230.3 1042.8,239.1 1043.1,244.0 1043.4,224.2 1043.7,237.8 1044.1,227.6 1044.4,228.9 1044.7,235.7 1045.1,245.8 1045.4,229.4 1045.7,222.0 1046.1,243.7 1046.4,213.8 1046.7,229.0 1047.0,226.9 1047.4,220.6 1047.7,219.1 1048.0,228.1 1048.4,225.5 1048.7,237.3 1049.0,232.4 1049.3,244.6 1049.7,228.8 1050.0,230.5 1050.3,231.0 1050.7,231.2 1051.0,255.2 1051.3,238.9 1051.6,246.0 1052.0,241.3 1052.3,235.2 1052.6,229.8 1053.0,242.8 1053.3,248.8 1053.6,248.1 1054.0,246.6 1054.3,249.1 1054.6,247.6 1054.9,246.2 1055.3,268.6 1055.6,271.2 1055.9,262.9 1056.3,262.8 1056.6,248.6 1056.9,261.6 1057.2,252.4 1057.6,268.5 1057.9,270.5 1058.2,239.4 1058.6,247.0 1058.9,261.7 1059.2,251.4 1059.6,234.2 1059.9,241.8 1060.2,247.3 1060.5,233.9 1060.9,235.1 1061.2,257.3 1061.5,220.0 1061.9,226.0 1062.2,233.1 1062.5,236.0 1062.8,237.1 1063.2,248.6 1063.5,228.1 1063.8,234.6 1064.2,239.1 1064.5,234.9 1064.8,213.9 1065.2,233.8 1065.5,219.9 1065.8,217.3 1066.1,226.7 1066.5,221.5 1066.8,236.2 1067.1,229.4 1067.5,225.1 1067.8,234.1 1068.1,233.2 1068.4,211.4 1068.8,215.9 1069.1,224.8 1069.4,233.8 1069.8,223.4 1070.1,233.9 1070.4,226.7 1070.7,224.9 1071.1,224.1 1071.4,231.2 1071.7,220.2 1072.1,217.0 1072.4,229.5 1072.7,225.0 1073.1,230.6 1073.4,224.8 1073.7,216.7 1074.0,230.9 1074.4,232.3 1074.7,227.8 1075.0,229.1 1075.4,224.7 1075.7,226.0 1076.0,245.5 1076.3,218.5 1076.7,230.0 1077.0,228.0 1077.3,232.1 1077.7,218.8 1078.0,220.4 1078.3,226.8 1078.7,223.8 1079.0,225.3 1079.3,233.6 1079.6,228.8 1080.0,216.0 1080.3,221.8 1080.6,210.4 1081.0,221.4 1081.3,238.7 1081.6,222.4 1081.9,227.7 1082.3,239.6 1082.6,240.3 1082.9,218.9 1083.3,221.4 1083.6,236.2 1083.9,232.5 1084.3,231.4 1084.6,226.0 1084.9,229.3 1085.2,221.2 1085.6,235.1 1085.9,220.1 1086.2,225.4 1086.6,229.3 1086.9,229.5 1087.2,225.7 1087.5,222.9 1087.9,231.0 1088.2,231.7 1088.5,229.7 1088.9,230.3 1089.2,220.0 1089.5,221.3 1089.9,242.2 1090.2,230.5 1090.5,237.0 1090.8,228.5 1091.2,230.5 1091.5,233.9 1091.8,223.5 1092.2,232.3 1092.5,227.7 1092.8,231.7 1093.1,225.9 1093.5,226.8 1093.8,233.9 1094.1,229.1 1094.5,231.5 1094.8,223.2 1095.1,239.9 1095.4,231.9 1095.8,233.6 1096.1,234.9 1096.4,219.8 1096.8,230.7 1097.1,225.2 1097.4,224.5 1097.8,229.9 1098.1,229.2 1098.4,237.9 1098.7,236.3 1099.1,230.4 1099.4,252.0 1099.7,241.3 1100.1,242.9 1100.4,255.4 1100.7,228.1 1101.0,219.0 1101.4,229.2 1101.7,229.9 1102.0,236.4 1102.4,217.8 1102.7,222.4 1103.0,218.8 1103.4,228.6 1103.7,222.0 1104.0,216.1 1104.3,223.6 1104.7,219.4 1105.0,217.7 1105.3,225.5 1105.7,223.6 1106.0,221.3 1106.3,222.2 1106.6,220.1 1107.0,228.3 1107.3,230.9 1107.6,215.4 1108.0,228.2 1108.3,225.2 1108.6,216.4 1109.0,253.1 1109.3,232.1 1109.6,251.6 1109.9,221.1 1110.3,214.4 1110.6,231.5 1110.9,226.3 1111.3,225.2 1111.6,248.3 1111.9,233.5 1112.2,227.8 1112.6,242.7 1112.9,234.0 1113.2,221.1 1113.6,224.9 1113.9,237.9 1114.2,236.1 1114.6,224.0 1114.9,239.5 1115.2,233.4 1115.5,227.5 1115.9,219.6 1116.2,231.2 1116.5,228.6 1116.9,225.2 1117.2,230.1 1117.5,228.9 1117.8,216.8 1118.2,216.6 1118.5,225.2 1118.8,226.3 1119.2,227.2 1119.5,220.5 1119.8,232.7 1120.1,223.6 1120.5,225.7 1120.8,220.8 1121.1,226.2 1121.5,236.6 1121.8,231.3 1122.1,232.0 1122.5,242.1 1122.8,238.4 1123.1,245.0 1123.4,249.0 1123.8,229.5 1124.1,244.5 1124.4,231.2 1124.8,236.8 1125.1,222.8 1125.4,226.0 1125.7,224.6 1126.1,220.4 1126.4,224.8 1126.7,235.1 1127.1,224.4 1127.4,221.6 1127.7,225.1 1128.1,222.8 1128.4,236.3 1128.7,223.8 1129.0,212.1 1129.4,234.2 1129.7,234.2 1130.0,210.5 1130.4,221.8 1130.7,214.8 1131.0,218.1 1131.3,239.3 1131.7,215.5 1132.0,223.2 1132.3,230.0 1132.7,218.3 1133.0,219.4 1133.3,217.5 1133.7,231.0 1134.0,205.3 1134.3,220.1 1134.6,211.7 1135.0,234.0 1135.3,229.0 1135.6,214.2 1136.0,212.7 1136.3,224.5 1136.6,214.2 1136.9,225.6 1137.3,225.3 1137.6,227.2 1137.9,231.2 1138.3,235.8 1138.6,223.4 1138.9,217.0 1139.3,219.9 1139.6,210.2 1139.9,226.8 1140.2,222.0 1140.6,231.2 1140.9,223.4 1141.2,216.6 1141.6,220.7 1141.9,229.8 1142.2,230.8 1142.5,226.7 1142.9,231.6 1143.2,232.9 1143.5,221.2 1143.9,234.8 1144.2,230.8 1144.5,221.8 1144.8,243.4 1145.2,222.2 1145.5,236.3 1145.8,240.7 1146.2,231.5 1146.5,233.8 1146.8,232.6 1147.2,221.0 1147.5,230.5 1147.8,246.0 1148.1,235.3 1148.5,228.5 1148.8,229.2 1149.1,239.4 1149.5,234.0 1149.8,234.2 1150.1,238.9 1150.4,227.1 1150.8,230.8 1151.1,226.0 1151.4,223.0 1151.8,228.5 1152.1,212.8 1152.4,221.6 1152.8,224.8 1153.1,223.1 1153.4,215.3 1153.7,234.6 1154.1,221.2 1154.4,237.1 1154.7,224.7 1155.1,240.6 1155.4,231.9 1155.7,235.9 1156.0,233.5 1156.4,222.9 1156.7,221.6 1157.0,228.7 1157.4,233.4 1157.7,221.3 1158.0,237.5 1158.4,240.4 1158.7,227.6 1159.0,227.4 1159.3,224.9 1159.7,226.6 1160.0,209.4 1160.3,233.8 1160.7,230.4 1161.0,233.3 1161.3,220.8 1161.6,234.3 1162.0,238.2 1162.3,229.2 1162.6,232.7 1163.0,225.3 1163.3,247.7 1163.6,221.8 1164.0,225.8 1164.3,231.1 1164.6,233.8 1164.9,225.9 1165.3,231.6 1165.6,226.8 1165.9,218.0 1166.3,230.1 1166.6,223.2 1166.9,227.0 1167.2,236.8 1167.6,222.8 1167.9,226.3 1168.2,239.8 1168.6,228.6 1168.9,218.1 1169.2,223.0 1169.5,223.4 1169.9,231.6 1170.2,227.3 1170.5,222.8 1170.9,231.4 1171.2,240.9 1171.5,213.2 1171.9,229.7 1172.2,213.0 1172.5,225.8 1172.8,232.4 1173.2,235.4 1173.5,219.0 1173.8,230.2 1174.2,240.6 1174.5,226.5 1174.8,230.5 1175.1,236.6 1175.5,237.9 1175.8,238.6 1176.1,233.5 1176.5,238.1 1176.8,244.2 1177.1,226.8 1177.5,224.3 1177.8,234.7 1178.1,232.6 1178.4,225.0 1178.8,237.2 1179.1,228.4 1179.4,221.8 1179.8,232.1 1180.1,249.2 1180.4,240.0 1180.7,235.0 1181.1,228.9 1181.4,244.5 1181.7,241.9 1182.1,225.0 1182.4,214.2 1182.7,223.1 1183.1,228.9 1183.4,219.1 1183.7,219.1 1184.0,219.4 1184.4,237.5 1184.7,213.7 1185.0,239.4 1185.4,229.3 1185.7,251.1 1186.0,224.7 1186.3,229.1 1186.7,222.7 1187.0,229.7 1187.3,238.5 1187.7,228.2 1188.0,240.8 1188.3,213.6 1188.7,243.2 1189.0,222.0 1189.3,236.3 1189.6,232.8 1190.0,230.9 1190.3,220.3 1190.6,225.6 1191.0,224.8 1191.3,238.6 1191.6,219.9 1191.9,228.2 1192.3,229.8 1192.6,216.0 1192.9,219.2 1193.3,225.4 1193.6,220.2 1193.9,236.5 1194.2,227.3 1194.6,224.8 1194.9,229.8 1195.2,232.3 1195.6,227.9 1195.9,237.5 1196.2,228.0 1196.6,219.1 1196.9,223.1 1197.2,225.0 1197.5,231.7 1197.9,213.3 1198.2,226.1 1198.5,235.9 1198.9,212.1 1199.2,212.3 1199.5,225.3 1199.8,221.1 1200.2,222.5 1200.5,224.4 1200.8,219.8 1201.2,231.2 1201.5,231.0 1201.8,234.0 1202.2,222.2 1202.5,225.2 1202.8,225.7 1203.1,217.8 1203.5,229.1 1203.8,226.0 1204.1,221.1 1204.5,211.8 1204.8,211.8 1205.1,219.3 1205.4,223.6 1205.8,219.6 1206.1,219.5 1206.4,217.5 1206.8,225.1 1207.1,238.1 1207.4,220.1 1207.8,229.2 1208.1,225.6 1208.4,232.1 1208.7,224.7 1209.1,239.0 1209.4,229.8 1209.7,223.0 1210.1,230.8 1210.4,232.2 1210.7,221.2 1211.0,215.0 1211.4,232.5 1211.7,233.8 1212.0,240.5 1212.4,229.5 1212.7,224.8 1213.0,229.3 1213.4,234.8 1213.7,226.8 1214.0,230.0 1214.3,232.7 1214.7,238.6 1215.0,226.0 1215.3,228.7 1215.7,219.8 1216.0,234.2 1216.3,228.2 1216.6,225.7 1217.0,233.4 1217.3,231.9 1217.6,231.6 1218.0,226.6 1218.3,218.5 1218.6,225.9 1218.9,243.3 1219.3,237.4 1219.6,230.1 1219.9,224.3 1220.3,227.8 1220.6,224.5 1220.9,235.3 1221.3,212.2 1221.6,230.6 1221.9,241.8 1222.2,227.2 1222.6,214.7 1222.9,234.5 1223.2,221.6 1223.6,222.3 1223.9,214.8 1224.2,223.0 1224.5,219.1 1224.9,223.2 1225.2,222.0 1225.5,233.4 1225.9,235.4 1226.2,224.1 1226.5,226.0 1226.9,224.7 1227.2,216.9 1227.5,236.9 1227.8,225.5 1228.2,216.7 1228.5,235.4 1228.8,232.0 1229.2,241.1 1229.5,218.3 1229.8,219.1 1230.1,235.8 1230.5,213.5 1230.8,225.3 1231.1,224.1 1231.5,217.9 1231.8,216.0 1232.1,230.6 1232.5,221.0 1232.8,224.4 1233.1,214.6 1233.4,231.6 1233.8,216.2 1234.1,243.8 1234.4,222.7 1234.8,216.9 1235.1,222.8 1235.4,218.5 1235.7,220.1 1236.1,240.3 1236.4,231.8 1236.7,217.5 1237.1,223.4 1237.4,226.0 1237.7,214.5 1238.1,220.6 1238.4,244.7 1238.7,234.0 1239.0,223.0 1239.4,226.9 1239.7,232.1 1240.0,225.5 1240.4,227.3 1240.7,224.1 1241.0,224.9 1241.3,227.4 1241.7,229.0 1242.0,225.7 1242.3,227.6 1242.7,226.8 1243.0,227.6 1243.3,234.7 1243.6,226.3 1244.0,237.4 1244.3,224.0 1244.6,216.2 1245.0,228.4 1245.3,226.7 1245.6,212.4 1246.0,227.3 1246.3,235.7 1246.6,222.9 1246.9,233.6 1247.3,220.8 1247.6,236.8 1247.9,225.2 1248.3,224.3 1248.6,218.8 1248.9,224.3 1249.2,237.7 1249.6,226.5 1249.9,227.7 1250.2,218.1 1250.6,232.1 1250.9,230.9 1251.2,225.6 1251.6,230.7 1251.9,237.6 1252.2,234.6 1252.5,227.1 1252.9,227.9 1253.2,235.4 1253.5,228.5 1253.9,225.6 1254.2,246.4 1254.5,239.5 1254.8,245.2 1255.2,241.4 1255.5,223.7 1255.8,224.6 1256.2,243.6 1256.5,221.1 1256.8,219.5 1257.2,226.6 1257.5,224.3 1257.8,224.4 1258.1,232.5 1258.5,217.1 1258.8,235.1 1259.1,230.4 1259.5,252.3 1259.8,221.1 1260.1,231.7 1260.4,214.9 1260.8,241.2 1261.1,215.7 1261.4,250.0 1261.8,228.6 1262.1,227.9 1262.4,231.7 1262.8,218.3 1263.1,236.8 1263.4,231.8 1263.7,229.0 1264.1,229.9 1264.4,231.7 1264.7,226.6 1265.1,231.4 1265.4,219.6 1265.7,235.5 1266.0,229.2 1266.4,224.9 1266.7,223.8 1267.0,217.9 1267.4,231.9 1267.7,220.3 1268.0,227.4 1268.3,244.8 1268.7,221.1 1269.0,239.7 1269.3,235.5 1269.7,234.2 1270.0,249.2 1270.3,254.3 1270.7,238.5 1271.0,229.0 1271.3,237.1 1271.6,233.4 1272.0,227.1 1272.3,229.0 1272.6,230.8 1273.0,215.8 1273.3,229.5 1273.6,233.7 1273.9,228.8 1274.3,222.4 1274.6,230.7 1274.9,232.9 1275.3,238.9 1275.6,211.7 1275.9,221.5 1276.3,236.1 1276.6,222.7 1276.9,223.5 1277.2,218.7 1277.6,235.1 1277.9,218.7 1278.2,221.1 1278.6,236.8 1278.9,225.4 1279.2,225.0 1279.5,224.4 1279.9,248.4 1280.2,225.5 1280.5,230.8 1280.9,222.5 1281.2,227.3 1281.5,234.1 1281.9,238.2 1282.2,232.4 1282.5,228.7 1282.8,231.7 1283.2,244.1 1283.5,221.7 1283.8,226.8 1284.2,232.9 1284.5,232.4 1284.8,230.4 1285.1,233.1 1285.5,236.8 1285.8,227.7 1286.1,236.9 1286.5,238.0 1286.8,235.2 1287.1,236.0 1287.5,233.3 1287.8,213.9 1288.1,236.7 1288.4,228.2 1288.8,224.3 1289.1,242.4 1289.4,230.6 1289.8,241.3 1290.1,233.0 1290.4,240.0 1290.7,225.0 1291.1,231.2 1291.4,219.3 1291.7,228.9 1292.1,230.1 1292.4,232.3 1292.7,234.9 1293.0,221.5 1293.4,241.1 1293.7,221.5 1294.0,231.8 1294.4,241.5 1294.7,230.0 1295.0,236.0 1295.4,236.3 1295.7,222.2 1296.0,226.3 1296.3,261.5 1296.7,232.4 1297.0,232.3 1297.3,234.4 1297.7,219.7 1298.0,237.4 1298.3,237.0 1298.6,228.9 1299.0,222.3 1299.3,243.2 1299.6,232.4 1300.0,233.8 1300.3,227.5 1300.6,218.2 1301.0,227.6 1301.3,237.8 1301.6,241.1 1301.9,262.8 1302.3,234.6 1302.6,228.7 1302.9,229.8 1303.3,238.7 1303.6,223.1 1303.9,243.1 1304.2,224.8 1304.6,228.1 1304.9,235.8 1305.2,223.2 1305.6,239.7 1305.9,237.7 1306.2,227.5 1306.6,217.5 1306.9,223.6 1307.2,235.1 1307.5,218.3 1307.9,213.4 1308.2,226.4 1308.5,227.3 1308.9,236.2 1309.2,236.0 1309.5,239.3 1309.8,235.1 1310.2,241.2 1310.5,229.5 1310.8,233.8 1311.2,231.5 1311.5,225.8 1311.8,238.7 1312.1,236.0 1312.5,229.4 1312.8,214.6 1313.1,223.9 1313.5,249.2 1313.8,224.3 1314.1,224.9 1314.5,230.2 1314.8,258.2 1315.1,234.2 1315.4,224.0 1315.8,214.0 1316.1,219.7 1316.4,229.6 1316.8,230.2 1317.1,224.1 1317.4,225.2 1317.7,219.5 1318.1,260.9 1318.4,229.9 1318.7,232.2 1319.1,235.6 1319.4,233.8 1319.7,236.7 1320.1,237.8 1320.4,246.8 1320.7,236.6 1321.0,227.8 1321.4,223.2 1321.7,232.1 1322.0,219.3 1322.4,221.0 1322.7,251.8 1323.0,229.8 1323.3,229.9 1323.7,226.1 1324.0,222.1 1324.3,233.5 1324.7,222.6 1325.0,247.6 1325.3,224.8 1325.7,240.0 1326.0,239.9 1326.3,222.2 1326.6,234.4 1327.0,223.7 1327.3,228.9 1327.6,226.0 1328.0,231.0 1328.3,243.9 1328.6,218.5 1328.9,218.3 1329.3,226.3 1329.6,228.0 1329.9,233.6 1330.3,235.7 1330.6,236.2 1330.9,240.3 1331.3,229.4 1331.6,219.9 1331.9,232.8 1332.2,226.1 1332.6,226.1 1332.9,236.8 1333.2,225.8 1333.6,231.6 1333.9,220.8 1334.2,221.6 1334.5,232.7 1334.9,232.1 1335.2,217.8 1335.5,236.9 1335.9,215.2 1336.2,218.2 1336.5,230.4 1336.8,226.9 1337.2,219.3 1337.5,235.6 1337.8,234.0 1338.2,219.0 1338.5,223.2 1338.8,223.0 1339.2,209.9 1339.5,225.5 1339.8,231.6 1340.1,220.9 1340.5,224.1 1340.8,232.6 1341.1,237.1 1341.5,225.4 1341.8,232.1 1342.1,235.6 1342.4,234.2 1342.8,219.0 1343.1,230.1 1343.4,226.9 1343.8,242.2 1344.1,241.0 1344.4,246.6 1344.8,228.7 1345.1,235.2 1345.4,251.5 1345.7,215.6 1346.1,230.4 1346.4,238.0 1346.7,224.4 1347.1,228.9 1347.4,229.5 1347.7,222.0 1348.0,234.2 1348.4,226.9 1348.7,240.3 1349.0,242.6 1349.4,241.7 1349.7,230.4 1350.0,232.0 1350.4,236.3 1350.7,228.6 1351.0,223.4 1351.3,243.7 1351.7,226.0 1352.0,223.5 1352.3,227.6 1352.7,225.9 1353.0,232.3 1353.3,240.5 1353.6,221.7 1354.0,236.3 1354.3,225.0 1354.6,218.9 1355.0,220.8 1355.3,226.7 1355.6,226.3 1356.0,219.6 1356.3,218.0 1356.6,235.9 1356.9,240.3 1357.3,224.2 1357.6,222.7 1357.9,228.6 1358.3,233.1 1358.6,244.1 1358.9,243.0 1359.2,257.0 1359.6,232.3 1359.9,224.6 1360.2,225.6 1360.6,238.4 1360.9,233.5 1361.2,228.3 1361.5,231.6 1361.9,228.9 1362.2,228.3 1362.5,239.8 1362.9,227.3 1363.2,215.3 1363.5,233.3 1363.9,235.9 1364.2,226.6 1364.5,226.9 1364.8,220.1 1365.2,221.5 1365.5,218.1 1365.8,227.8 1366.2,217.1 1366.5,218.2 1366.8,214.5 1367.1,213.5 1367.5,230.3 1367.8,231.9 1368.1,227.9 1368.5,214.4 1368.8,222.1 1369.1,238.0 1369.5,227.0 1369.8,240.2 1370.1,212.7 1370.4,222.3 1370.8,237.3 1371.1,223.9 1371.4,210.5 1371.8,223.8 1372.1,239.7 1372.4,230.6 1372.7,222.6 1373.1,216.2 1373.4,222.6 1373.7,224.0 1374.1,238.4 1374.4,223.9 1374.7,218.6 1375.1,236.8 1375.4,237.0 1375.7,237.4 1376.0,226.9 1376.4,231.0 1376.7,217.8 1377.0,220.2 1377.4,224.8 1377.7,227.1 1378.0,243.6 1378.3,231.3 1378.7,229.0 1379.0,217.4 1379.3,227.9 1379.7,219.4 1380.0,223.7 1380.3,221.5 1380.7,229.1 1381.0,238.6 1381.3,218.4 1381.6,216.3 1382.0,242.4 1382.3,227.7 1382.6,224.2 1383.0,218.2 1383.3,235.3 1383.6,210.0 1383.9,225.8 1384.3,221.2 1384.6,225.4 1384.9,217.3 1385.3,220.6 1385.6,218.6 1385.9,229.5 1386.2,223.7 1386.6,221.6 1386.9,211.1 1387.2,219.9 1387.6,225.9 1387.9,215.7 1388.2,230.5 1388.6,222.2 1388.9,222.6 1389.2,228.8 1389.5,227.4 1389.9,222.2 1390.2,241.4 1390.5,225.4 1390.9,247.7 1391.2,249.7 1391.5,220.1 1391.8,228.1 1392.2,222.3 1392.5,225.0 1392.8,218.4 1393.2,229.0 1393.5,231.8 1393.8,229.8 1394.2,266.9 1394.5,247.7 1394.8,222.0 1395.1,247.3 1395.5,224.8 1395.8,223.1 1396.1,239.8 1396.5,239.2 1396.8,241.8 1397.1,238.2 1397.4,232.9 1397.8,236.3 1398.1,234.5 1398.4,238.6 1398.8,218.0 1399.1,229.8 1399.4,235.4 1399.8,239.4 1400.1,225.3 1400.4,228.5 1400.7,222.3 1401.1,228.5 1401.4,223.0 1401.7,233.9 1402.1,246.1 1402.4,233.6 1402.7,237.9 1403.0,237.6 1403.4,225.5 1403.7,229.6 1404.0,234.6 1404.4,241.7 1404.7,235.6 1405.0,243.7 1405.4,243.0 1405.7,241.2 1406.0,251.6 1406.3,255.0 1406.7,245.9 1407.0,259.4 1407.3,258.9 1407.7,252.6 1408.0,264.4 1408.3,268.7 1408.6,254.8 1409.0,263.7 1409.3,279.0 1409.6,271.8 1410.0,278.4 1410.3,277.3 1410.6,267.6 1410.9,295.6 1411.3,296.5 1411.6,278.8 1411.9,290.1 1412.3,293.7 1412.6,302.4 1412.9,279.9 1413.3,281.7 1413.6,292.5 1413.9,295.9 1414.2,283.2 1414.6,276.0 1414.9,276.4 1415.2,280.7 1415.6,297.5 1415.9,294.7 1416.2,289.5 1416.5,316.3 1416.9,320.1 1417.2,310.0 1417.5,297.1 1417.9,292.2 1418.2,301.2 1418.5,299.6 1418.9,284.2 1419.2,293.4 1419.5,289.4 1419.8,297.4 1420.2,291.8 1420.5,297.3" fill="none" stroke="#fadd5a" stroke-width="1.8" stroke-linejoin="round"/>
<rect x="696.3" y="191.2" width="724.2" height="130.10000000000002" fill="none" stroke="#cfcfcf" stroke-width="1.3"/>
<line x1="696.3" y1="321.3" x2="696.3" y2="313.3" stroke="#cfcfcf" stroke-width="1"/>
<line x1="696.3" y1="191.2" x2="696.3" y2="199.2" stroke="#cfcfcf" stroke-width="1"/>
<line x1="732.5" y1="321.3" x2="732.5" y2="317.3" stroke="#cfcfcf" stroke-width="1"/>
<line x1="732.5" y1="191.2" x2="732.5" y2="195.2" stroke="#cfcfcf" stroke-width="1"/>
<line x1="768.7" y1="321.3" x2="768.7" y2="313.3" stroke="#cfcfcf" stroke-width="1"/>
<line x1="768.7" y1="191.2" x2="768.7" y2="199.2" stroke="#cfcfcf" stroke-width="1"/>
<line x1="804.9" y1="321.3" x2="804.9" y2="317.3" stroke="#cfcfcf" stroke-width="1"/>
<line x1="804.9" y1="191.2" x2="804.9" y2="195.2" stroke="#cfcfcf" stroke-width="1"/>
<line x1="841.1" y1="321.3" x2="841.1" y2="313.3" stroke="#cfcfcf" stroke-width="1"/>
<line x1="841.1" y1="191.2" x2="841.1" y2="199.2" stroke="#cfcfcf" stroke-width="1"/>
<line x1="877.3" y1="321.3" x2="877.3" y2="317.3" stroke="#cfcfcf" stroke-width="1"/>
<line x1="877.3" y1="191.2" x2="877.3" y2="195.2" stroke="#cfcfcf" stroke-width="1"/>
<line x1="913.6" y1="321.3" x2="913.6" y2="313.3" stroke="#cfcfcf" stroke-width="1"/>
<line x1="913.6" y1="191.2" x2="913.6" y2="199.2" stroke="#cfcfcf" stroke-width="1"/>
<line x1="949.8" y1="321.3" x2="949.8" y2="317.3" stroke="#cfcfcf" stroke-width="1"/>
<line x1="949.8" y1="191.2" x2="949.8" y2="195.2" stroke="#cfcfcf" stroke-width="1"/>
<line x1="986.0" y1="321.3" x2="986.0" y2="313.3" stroke="#cfcfcf" stroke-width="1"/>
<line x1="986.0" y1="191.2" x2="986.0" y2="199.2" stroke="#cfcfcf" stroke-width="1"/>
<line x1="1022.2" y1="321.3" x2="1022.2" y2="317.3" stroke="#cfcfcf" stroke-width="1"/>
<line x1="1022.2" y1="191.2" x2="1022.2" y2="195.2" stroke="#cfcfcf" stroke-width="1"/>
<line x1="1058.4" y1="321.3" x2="1058.4" y2="313.3" stroke="#cfcfcf" stroke-width="1"/>
<line x1="1058.4" y1="191.2" x2="1058.4" y2="199.2" stroke="#cfcfcf" stroke-width="1"/>
<line x1="1094.6" y1="321.3" x2="1094.6" y2="317.3" stroke="#cfcfcf" stroke-width="1"/>
<line x1="1094.6" y1="191.2" x2="1094.6" y2="195.2" stroke="#cfcfcf" stroke-width="1"/>
<line x1="1130.8" y1="321.3" x2="1130.8" y2="313.3" stroke="#cfcfcf" stroke-width="1"/>
<line x1="1130.8" y1="191.2" x2="1130.8" y2="199.2" stroke="#cfcfcf" stroke-width="1"/>
<line x1="1167.0" y1="321.3" x2="1167.0" y2="317.3" stroke="#cfcfcf" stroke-width="1"/>
<line x1="1167.0" y1="191.2" x2="1167.0" y2="195.2" stroke="#cfcfcf" stroke-width="1"/>
<line x1="1203.2" y1="321.3" x2="1203.2" y2="313.3" stroke="#cfcfcf" stroke-width="1"/>
<line x1="1203.2" y1="191.2" x2="1203.2" y2="199.2" stroke="#cfcfcf" stroke-width="1"/>
<line x1="1239.5" y1="321.3" x2="1239.5" y2="317.3" stroke="#cfcfcf" stroke-width="1"/>
<line x1="1239.5" y1="191.2" x2="1239.5" y2="195.2" stroke="#cfcfcf" stroke-width="1"/>
<line x1="1275.7" y1="321.3" x2="1275.7" y2="313.3" stroke="#cfcfcf" stroke-width="1"/>
<line x1="1275.7" y1="191.2" x2="1275.7" y2="199.2" stroke="#cfcfcf" stroke-width="1"/>
<line x1="1311.9" y1="321.3" x2="1311.9" y2="317.3" stroke="#cfcfcf" stroke-width="1"/>
<line x1="1311.9" y1="191.2" x2="1311.9" y2="195.2" stroke="#cfcfcf" stroke-width="1"/>
<line x1="1348.1" y1="321.3" x2="1348.1" y2="313.3" stroke="#cfcfcf" stroke-width="1"/>
<line x1="1348.1" y1="191.2" x2="1348.1" y2="199.2" stroke="#cfcfcf" stroke-width="1"/>
<line x1="1384.3" y1="321.3" x2="1384.3" y2="317.3" stroke="#cfcfcf" stroke-width="1"/>
<line x1="1384.3" y1="191.2" x2="1384.3" y2="195.2" stroke="#cfcfcf" stroke-width="1"/>
<line x1="1420.5" y1="321.3" x2="1420.5" y2="313.3" stroke="#cfcfcf" stroke-width="1"/>
<line x1="1420.5" y1="191.2" x2="1420.5" y2="199.2" stroke="#cfcfcf" stroke-width="1"/>
<line x1="696.3" y1="197.6" x2="700.3" y2="197.6" stroke="#cfcfcf" stroke-width="1"/>
<line x1="1420.5" y1="197.6" x2="1416.5" y2="197.6" stroke="#cfcfcf" stroke-width="1"/>
<line x1="696.3" y1="227.5" x2="704.3" y2="227.5" stroke="#cfcfcf" stroke-width="1"/>
<line x1="1420.5" y1="227.5" x2="1412.5" y2="227.5" stroke="#cfcfcf" stroke-width="1"/>
<line x1="696.3" y1="257.4" x2="700.3" y2="257.4" stroke="#cfcfcf" stroke-width="1"/>
<line x1="1420.5" y1="257.4" x2="1416.5" y2="257.4" stroke="#cfcfcf" stroke-width="1"/>
<line x1="696.3" y1="287.2" x2="700.3" y2="287.2" stroke="#cfcfcf" stroke-width="1"/>
<line x1="1420.5" y1="287.2" x2="1416.5" y2="287.2" stroke="#cfcfcf" stroke-width="1"/>
<line x1="696.3" y1="317.1" x2="704.3" y2="317.1" stroke="#cfcfcf" stroke-width="1"/>
<line x1="1420.5" y1="317.1" x2="1412.5" y2="317.1" stroke="#cfcfcf" stroke-width="1"/>
</svg>
<div class="t" style="left:396.00px;width:600px;text-align:center;top:326.37px;font-size:13.5px;color:#d6d6d6;font-weight:normal;">-10</div>
<div class="t" style="left:468.42px;width:600px;text-align:center;top:326.37px;font-size:13.5px;color:#d6d6d6;font-weight:normal;">-8</div>
<div class="t" style="left:540.84px;width:600px;text-align:center;top:326.37px;font-size:13.5px;color:#d6d6d6;font-weight:normal;">-6</div>
<div class="t" style="left:613.26px;width:600px;text-align:center;top:326.37px;font-size:13.5px;color:#d6d6d6;font-weight:normal;">-4</div>
<div class="t" style="left:685.68px;width:600px;text-align:center;top:326.37px;font-size:13.5px;color:#d6d6d6;font-weight:normal;">-2</div>
<div class="t" style="left:758.40px;width:600px;text-align:center;top:326.37px;font-size:13.5px;color:#d6d6d6;font-weight:normal;">0</div>
<div class="t" style="left:830.82px;width:600px;text-align:center;top:326.37px;font-size:13.5px;color:#d6d6d6;font-weight:normal;">2</div>
<div class="t" style="left:903.24px;width:600px;text-align:center;top:326.37px;font-size:13.5px;color:#d6d6d6;font-weight:normal;">4</div>
<div class="t" style="left:975.66px;width:600px;text-align:center;top:326.37px;font-size:13.5px;color:#d6d6d6;font-weight:normal;">6</div>
<div class="t" style="left:1048.08px;width:600px;text-align:center;top:326.37px;font-size:13.5px;color:#d6d6d6;font-weight:normal;">8</div>
<div class="t" style="left:1120.50px;width:600px;text-align:center;top:326.37px;font-size:13.5px;color:#d6d6d6;font-weight:normal;">10</div>
<div class="t" style="left:91.40px;width:600px;text-align:right;top:220.87px;font-size:13.5px;color:#d6d6d6;font-weight:normal;">0</div>
<div class="t" style="left:91.40px;width:600px;text-align:right;top:309.97px;font-size:13.5px;color:#d6d6d6;font-weight:normal;">-30</div>
<div class="t" style="left:758.40px;width:600px;text-align:center;top:342.36px;font-size:16px;color:#d6d6d6;font-weight:normal;">Frequency (MHz)</div>
<div class="t" style="left:602.7px;top:248.39999999999998px;width:100px;height:16px;text-align:center;font-size:15.5px;color:#d6d6d6;transform:rotate(-90deg);line-height:16px">dBm</div>
<div class="a" style="left:636px;top:396px;width:800px;height:29px;background:#fff"></div>
<div class="a" style="left:640px;top:406.2px;width:6px;height:1.4px;background:#9a9a9a"></div>
<div class="a" style="left:640px;top:408.8px;width:6px;height:1.4px;background:#9a9a9a"></div>
<div class="a" style="left:640px;top:411.4px;width:6px;height:1.4px;background:#9a9a9a"></div>
<div class="a" style="left:640px;top:414.0px;width:6px;height:1.4px;background:#9a9a9a"></div>
<div class="a" style="left:647px;top:396px;width:75px;height:29px;background:#e6e6e6;border-right:1px solid #cfcfcf;border-left:1px solid #d8d8d8"></div>
<div class="a" style="left:647px;top:396px;width:75px;height:3px;background:#9b9b9b"></div>
<div class="t" style="left:658.60px;top:404.90px;font-size:15px;color:#5f6b78;font-weight:normal;">Users</div>
<div class="a" style="left:727px;top:396px;width:116px;height:29px;background:#fff;border-left:1px solid #cfcfcf;border-right:1px solid #cfcfcf"></div>
<div class="a" style="left:727px;top:396px;width:116px;height:3px;background:#9b9b9b"></div>
<div class="t" style="left:738.50px;top:404.90px;font-size:15px;color:#4f6070;font-weight:normal;">Time Scope</div>
<div class="a" style="left:1414.1px;top:405.1px;width:2.8px;height:2.8px;background:#5c5c5c;border-radius:50%"></div>
<div class="a" style="left:1414.1px;top:410.1px;width:2.8px;height:2.8px;background:#5c5c5c;border-radius:50%"></div>
<div class="a" style="left:1414.1px;top:415.1px;width:2.8px;height:2.8px;background:#5c5c5c;border-radius:50%"></div>
<div class="a" style="left:636px;top:425px;width:800px;height:369px;background:#212121"></div>
<div class="a" style="left:642px;top:437.6px;width:38px;height:2px;background:#f9dd5a;border-radius:1px"></div>
<div class="t" style="left:682.80px;top:430.95px;font-size:14px;color:#f2f2f2;font-weight:normal;">real(real)</div>
<div class="a" style="left:757px;top:437.6px;width:38px;height:2px;background:#1f8fe0;border-radius:1px"></div>
<div class="t" style="left:797.00px;top:430.95px;font-size:14px;color:#f2f2f2;font-weight:normal;">imag(real)</div>
<div class="a" style="left:636px;top:450.5px;width:800px;height:1.6px;background:#cfcfcf"></div>
<svg style="left:0;top:0" width="1436" height="821">
<rect x="688.5" y="463.7" width="732.0" height="283.3" fill="#131313"/>
<line x1="737.4" y1="463.7" x2="737.4" y2="747.0" stroke="#4d4d4d" stroke-width="1"/>
<line x1="883.5" y1="463.7" x2="883.5" y2="747.0" stroke="#4d4d4d" stroke-width="1"/>
<line x1="1029.6" y1="463.7" x2="1029.6" y2="747.0" stroke="#4d4d4d" stroke-width="1"/>
<line x1="1176.5" y1="463.7" x2="1176.5" y2="747.0" stroke="#4d4d4d" stroke-width="1"/>
<line x1="1322.5" y1="463.7" x2="1322.5" y2="747.0" stroke="#4d4d4d" stroke-width="1"/>
<line x1="688.5" y1="484.2" x2="1420.5" y2="484.2" stroke="#4d4d4d" stroke-width="1"/>
<line x1="688.5" y1="544.7" x2="1420.5" y2="544.7" stroke="#4d4d4d" stroke-width="1"/>
<line x1="688.5" y1="605.2" x2="1420.5" y2="605.2" stroke="#4d4d4d" stroke-width="1"/>
<line x1="688.5" y1="665.7" x2="1420.5" y2="665.7" stroke="#4d4d4d" stroke-width="1"/>
<line x1="688.5" y1="726.2" x2="1420.5" y2="726.2" stroke="#4d4d4d" stroke-width="1"/>
<clipPath id="tc"><rect x="688.5" y="463.7" width="732.0" height="283.3"/></clipPath>
<polyline clip-path="url(#tc)" points="688.5,602.2 712.9,640.1 737.3,613.2 761.7,586.9 786.1,610.3 810.5,571.5 834.9,595.6 859.3,618 883.7,652.6 908.1,626.3 932.5,585.8 956.9,632.2 981.3,646 1005.7,636.8 1030.1,628.5 1054.5,582 1078.9,597.2 1103.3,605.1 1127.7,638 1152.1,636.8 1176.5,583.1 1200.9,632.9 1225.3,627.4 1249.7,603.7 1274.1,634.4 1298.5,605.5 1322.9,549.6 1347.3,609.4 1371.7,590.6 1396.1,581.8 1420.5,618.2" fill="none" stroke="#1f8fe0" stroke-width="2" stroke-linejoin="miter"/>
<polyline clip-path="url(#tc)" points="688.5,619.7 712.9,581.8 737.3,585.8 761.7,563.2 786.1,587.5 810.5,596.1 834.9,597.4 859.3,632.9 883.7,620.4 908.1,638.8 932.5,601.6 956.9,610.3 981.3,575.9 1005.7,604 1030.1,607.7 1054.5,605.1 1078.9,584 1103.3,592.8 1127.7,651.5 1152.1,611.6 1176.5,569.3 1200.9,586.2 1225.3,641 1249.7,614.7 1274.1,649.3 1298.5,621.2 1322.9,612.7 1347.3,589 1371.7,593 1396.1,593 1420.5,568.7" fill="none" stroke="#f9dd5a" stroke-width="2" stroke-linejoin="miter"/>
<rect x="688.5" y="463.7" width="732.0" height="283.3" fill="none" stroke="#cfcfcf" stroke-width="1.3"/>
<line x1="737.4" y1="747.0" x2="737.4" y2="740.0" stroke="#cfcfcf" stroke-width="1"/>
<line x1="737.4" y1="463.7" x2="737.4" y2="470.7" stroke="#cfcfcf" stroke-width="1"/>
<line x1="786.1" y1="747.0" x2="786.1" y2="742.0" stroke="#cfcfcf" stroke-width="1"/>
<line x1="786.1" y1="463.7" x2="786.1" y2="468.7" stroke="#cfcfcf" stroke-width="1"/>
<line x1="834.8" y1="747.0" x2="834.8" y2="742.0" stroke="#cfcfcf" stroke-width="1"/>
<line x1="834.8" y1="463.7" x2="834.8" y2="468.7" stroke="#cfcfcf" stroke-width="1"/>
<line x1="883.5" y1="747.0" x2="883.5" y2="740.0" stroke="#cfcfcf" stroke-width="1"/>
<line x1="883.5" y1="463.7" x2="883.5" y2="470.7" stroke="#cfcfcf" stroke-width="1"/>
<line x1="932.2" y1="747.0" x2="932.2" y2="742.0" stroke="#cfcfcf" stroke-width="1"/>
<line x1="932.2" y1="463.7" x2="932.2" y2="468.7" stroke="#cfcfcf" stroke-width="1"/>
<line x1="980.9" y1="747.0" x2="980.9" y2="742.0" stroke="#cfcfcf" stroke-width="1"/>
<line x1="980.9" y1="463.7" x2="980.9" y2="468.7" stroke="#cfcfcf" stroke-width="1"/>
<line x1="1029.6" y1="747.0" x2="1029.6" y2="740.0" stroke="#cfcfcf" stroke-width="1"/>
<line x1="1029.6" y1="463.7" x2="1029.6" y2="470.7" stroke="#cfcfcf" stroke-width="1"/>
<line x1="1078.3" y1="747.0" x2="1078.3" y2="742.0" stroke="#cfcfcf" stroke-width="1"/>
<line x1="1078.3" y1="463.7" x2="1078.3" y2="468.7" stroke="#cfcfcf" stroke-width="1"/>
<line x1="1127.0" y1="747.0" x2="1127.0" y2="742.0" stroke="#cfcfcf" stroke-width="1"/>
<line x1="1127.0" y1="463.7" x2="1127.0" y2="468.7" stroke="#cfcfcf" stroke-width="1"/>
<line x1="1175.7" y1="747.0" x2="1175.7" y2="740.0" stroke="#cfcfcf" stroke-width="1"/>
<line x1="1175.7" y1="463.7" x2="1175.7" y2="470.7" stroke="#cfcfcf" stroke-width="1"/>
<line x1="1224.4" y1="747.0" x2="1224.4" y2="742.0" stroke="#cfcfcf" stroke-width="1"/>
<line x1="1224.4" y1="463.7" x2="1224.4" y2="468.7" stroke="#cfcfcf" stroke-width="1"/>
<line x1="1273.1" y1="747.0" x2="1273.1" y2="742.0" stroke="#cfcfcf" stroke-width="1"/>
<line x1="1273.1" y1="463.7" x2="1273.1" y2="468.7" stroke="#cfcfcf" stroke-width="1"/>
<line x1="1321.8" y1="747.0" x2="1321.8" y2="740.0" stroke="#cfcfcf" stroke-width="1"/>
<line x1="1321.8" y1="463.7" x2="1321.8" y2="470.7" stroke="#cfcfcf" stroke-width="1"/>
<line x1="1370.5" y1="747.0" x2="1370.5" y2="742.0" stroke="#cfcfcf" stroke-width="1"/>
<line x1="1370.5" y1="463.7" x2="1370.5" y2="468.7" stroke="#cfcfcf" stroke-width="1"/>
<line x1="1419.2" y1="747.0" x2="1419.2" y2="742.0" stroke="#cfcfcf" stroke-width="1"/>
<line x1="1419.2" y1="463.7" x2="1419.2" y2="468.7" stroke="#cfcfcf" stroke-width="1"/>
<line x1="688.5" y1="484.2" x2="695.5" y2="484.2" stroke="#cfcfcf" stroke-width="1"/>
<line x1="1420.5" y1="484.2" x2="1413.5" y2="484.2" stroke="#cfcfcf" stroke-width="1"/>
<line x1="688.5" y1="514.5" x2="693.5" y2="514.5" stroke="#cfcfcf" stroke-width="1"/>
<line x1="1420.5" y1="514.5" x2="1415.5" y2="514.5" stroke="#cfcfcf" stroke-width="1"/>
<line x1="688.5" y1="544.7" x2="695.5" y2="544.7" stroke="#cfcfcf" stroke-width="1"/>
<line x1="1420.5" y1="544.7" x2="1413.5" y2="544.7" stroke="#cfcfcf" stroke-width="1"/>
<line x1="688.5" y1="575.0" x2="693.5" y2="575.0" stroke="#cfcfcf" stroke-width="1"/>
<line x1="1420.5" y1="575.0" x2="1415.5" y2="575.0" stroke="#cfcfcf" stroke-width="1"/>
<line x1="688.5" y1="605.2" x2="695.5" y2="605.2" stroke="#cfcfcf" stroke-width="1"/>
<line x1="1420.5" y1="605.2" x2="1413.5" y2="605.2" stroke="#cfcfcf" stroke-width="1"/>
<line x1="688.5" y1="635.5" x2="693.5" y2="635.5" stroke="#cfcfcf" stroke-width="1"/>
<line x1="1420.5" y1="635.5" x2="1415.5" y2="635.5" stroke="#cfcfcf" stroke-width="1"/>
<line x1="688.5" y1="665.7" x2="695.5" y2="665.7" stroke="#cfcfcf" stroke-width="1"/>
<line x1="1420.5" y1="665.7" x2="1413.5" y2="665.7" stroke="#cfcfcf" stroke-width="1"/>
<line x1="688.5" y1="696.0" x2="693.5" y2="696.0" stroke="#cfcfcf" stroke-width="1"/>
<line x1="1420.5" y1="696.0" x2="1415.5" y2="696.0" stroke="#cfcfcf" stroke-width="1"/>
<line x1="688.5" y1="726.2" x2="695.5" y2="726.2" stroke="#cfcfcf" stroke-width="1"/>
<line x1="1420.5" y1="726.2" x2="1413.5" y2="726.2" stroke="#cfcfcf" stroke-width="1"/>
</svg>
<div class="t" style="left:83.40px;width:600px;text-align:right;top:477.57px;font-size:13.5px;color:#d6d6d6;font-weight:normal;">4</div>
<div class="t" style="left:83.40px;width:600px;text-align:right;top:538.07px;font-size:13.5px;color:#d6d6d6;font-weight:normal;">2</div>
<div class="t" style="left:83.40px;width:600px;text-align:right;top:598.57px;font-size:13.5px;color:#d6d6d6;font-weight:normal;">0</div>
<div class="t" style="left:83.40px;width:600px;text-align:right;top:659.07px;font-size:13.5px;color:#d6d6d6;font-weight:normal;">-2</div>
<div class="t" style="left:83.40px;width:600px;text-align:right;top:719.57px;font-size:13.5px;color:#d6d6d6;font-weight:normal;">-4</div>
<div class="t" style="left:437.40px;width:600px;text-align:center;top:752.60px;font-size:13.7px;color:#d6d6d6;font-weight:normal;">0.0001854</div>
<div class="t" style="left:583.50px;width:600px;text-align:center;top:752.60px;font-size:13.7px;color:#d6d6d6;font-weight:normal;">0.0001857</div>
<div class="t" style="left:729.60px;width:600px;text-align:center;top:752.60px;font-size:13.7px;color:#d6d6d6;font-weight:normal;">0.000186</div>
<div class="t" style="left:876.50px;width:600px;text-align:center;top:752.60px;font-size:13.7px;color:#d6d6d6;font-weight:normal;">0.0001863</div>
<div class="t" style="left:1022.50px;width:600px;text-align:center;top:752.60px;font-size:13.7px;color:#d6d6d6;font-weight:normal;">0.0001866</div>
<div class="t" style="left:754.50px;width:600px;text-align:center;top:767.96px;font-size:16px;color:#d6d6d6;font-weight:normal;">Time (secs)</div>
<div class="t" style="left:593.2px;top:597px;width:120px;height:16px;text-align:center;font-size:16px;color:#d6d6d6;transform:rotate(-90deg);line-height:16px">Amplitude</div>
<div class="a" style="left:0px;top:794px;width:635px;height:27px;background:#e6e6e6"></div>
<div class="a" style="left:0px;top:794px;width:635px;height:2px;background:#b4b4b4"></div>
<div class="a" style="left:636px;top:794px;width:800px;height:27px;background:#e6e6e6"></div>
<div class="a" style="left:635px;top:794px;width:1px;height:27px;background:#b4b4b4"></div>
<div class="a" style="left:5.2px;top:801px;width:2.7px;height:15px;background:#9a9a9a"></div>
<svg style="left:0;top:0" width="1" height="1"><polygon points="17.1,801 17.1,816 8.4,808.5" fill="#9a9a9a"/></svg>
<div class="t" style="left:644.80px;top:800.50px;font-size:15px;color:#262626;font-weight:normal;">Completed generation of 802.11be waveform</div>
<div class="a" style="left:1288px;top:806px;width:148px;height:6px;background:#0096ff"></div>
</body></html>
